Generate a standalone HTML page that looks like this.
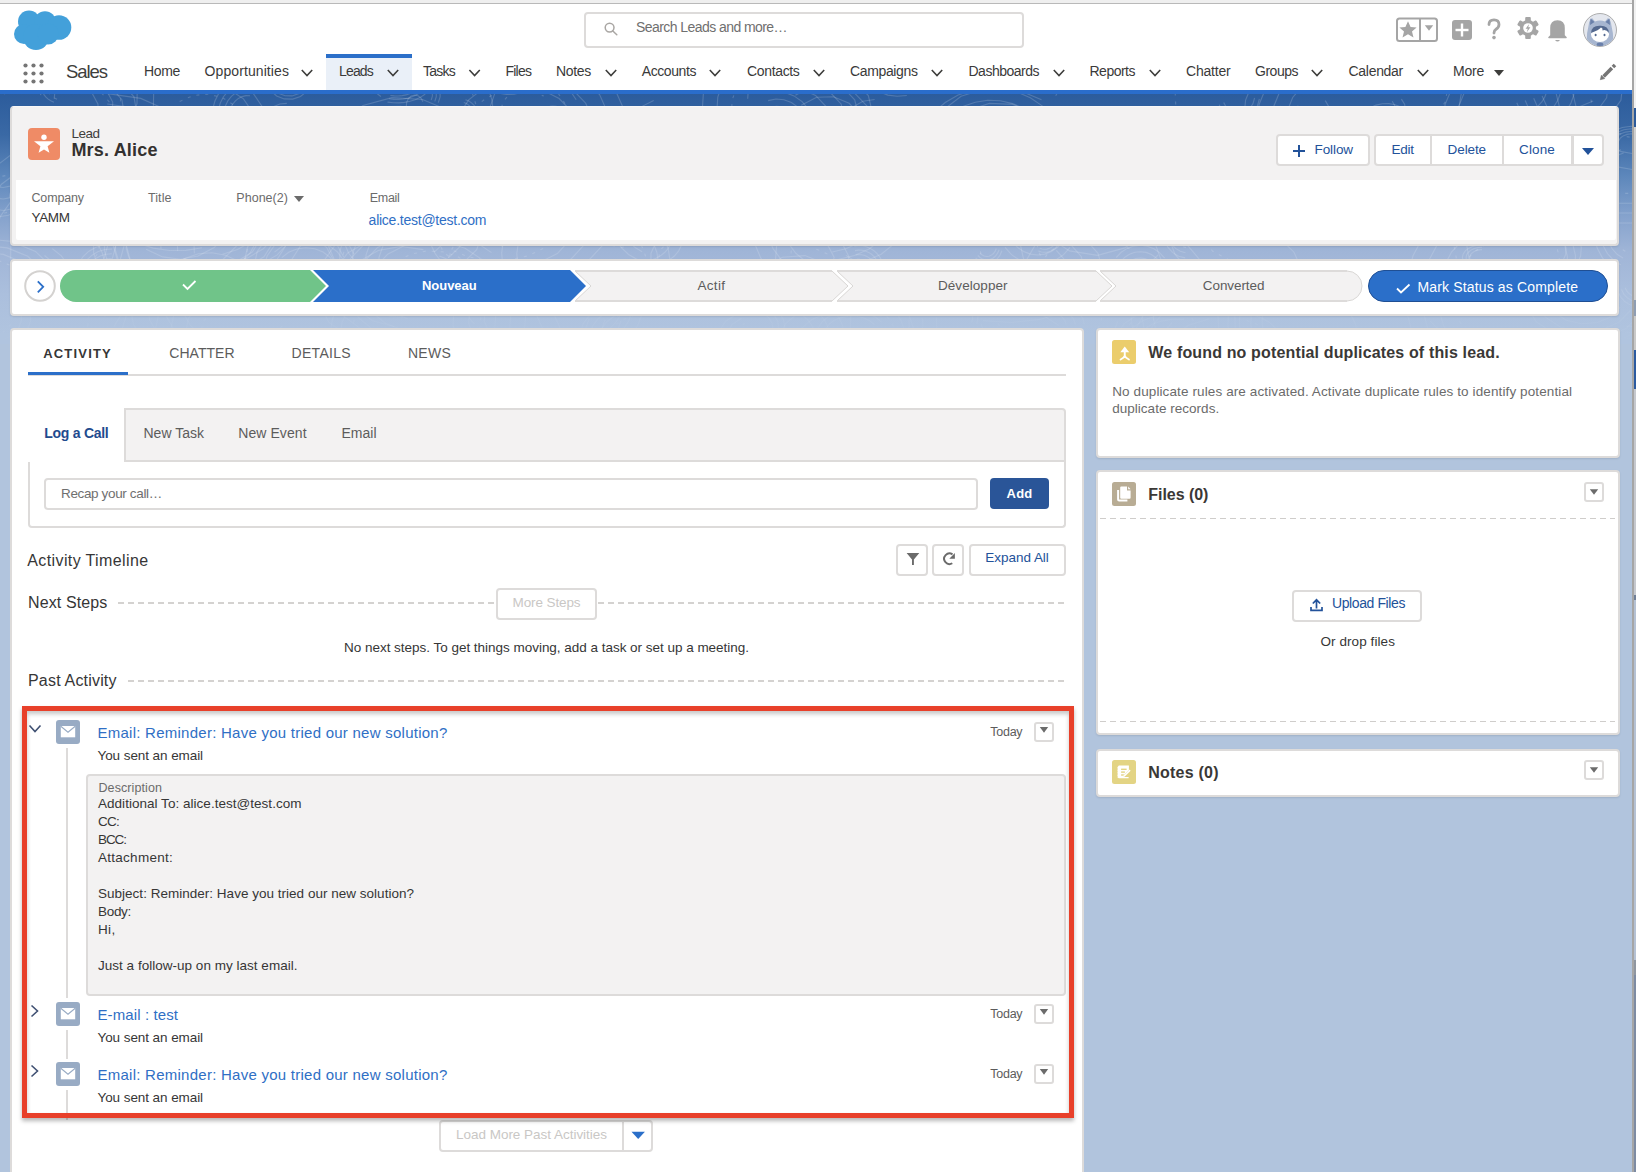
<!DOCTYPE html>
<html><head><meta charset="utf-8"><style>
html,body{margin:0;padding:0;}
body{width:1636px;height:1172px;overflow:hidden;position:relative;font-family:"Liberation Sans",sans-serif;background:#b1c4dd;}
.a{position:absolute;}
.t{position:absolute;white-space:pre;line-height:1;}
</style></head><body>
<div class="a" style="left:0;top:0;width:1636px;height:3px;background:#efefef"></div><div class="a" style="left:0;top:3px;width:1632px;height:1px;background:#b9b9b9"></div><div class="a" style="left:0;top:4px;width:1632px;height:86px;background:#fff"></div><div class="a" style="left:0;top:90px;width:1632px;height:4px;background:#2a6dcb"></div><div class="a" style="left:0;top:94px;width:1632px;height:250px;background:linear-gradient(to bottom,#2c5c9c 0px,#3a69a5 41px,#5d87bb 82px,#86a3cd 123px,#a0b5d7 158px,#abbfdd 200px,#b0c4df 240px)"></div><svg class="a" style="left:0;top:94px" width="1632" height="250" viewBox="0 94 1632 250"><defs><linearGradient id="pg" x1="0" y1="94" x2="0" y2="344" gradientUnits="userSpaceOnUse"><stop offset="0" stop-color="#fff" stop-opacity="0.17"/><stop offset="0.7" stop-color="#fff" stop-opacity="0.14"/><stop offset="1" stop-color="#fff" stop-opacity="0"/></linearGradient></defs><g fill="none" stroke="url(#pg)" stroke-width="1.1"><path d="M476.2 108.6 L479.9 103.1 L486.0 98.3 L494.1 94.5 L503.6 91.9 L514.1 90.8 L524.7 91.1 L534.8 92.9 L543.8 96.1" stroke-dasharray="3 6"/><path d="M464.0 107.1 L468.7 99.9 L476.7 93.6 L487.2 88.7 L499.6 85.4 L513.2 83.9 L527.0 84.3 L540.2 86.6 L551.9 90.7"/><path d="M14.1 198.8 L12.9 196.3 L13.4 193.8 L15.5 191.6 L19.0 190.0 L23.3 189.2 L27.7 189.5 L31.7 190.6 L34.6 192.5" stroke-dasharray="3 6"/><path d="M11.0 199.6 L9.4 196.5 L10.1 193.2 L12.8 190.3 L17.3 188.3 L22.9 187.3 L28.7 187.6 L33.9 189.1 L37.7 191.6"/><path d="M1055.4 242.2 L1054.4 244.2 L1053.0 245.9 L1051.2 247.4 L1049.1 248.4 L1046.8 249.1 L1044.4 249.3 L1042.1 249.0 L1039.8 248.3"/><path d="M1058.6 243.1 L1057.3 245.7 L1055.5 248.0 L1053.1 249.9 L1050.4 251.3 L1047.5 252.1 L1044.4 252.3 L1041.3 252.0 L1038.3 251.0"/><path d="M463.8 102.6 L466.3 103.6 L468.4 104.9 L470.2 106.6 L471.4 108.4 L472.1 110.4 L472.2 112.4 L471.8 114.4 L470.8 116.3"/><path d="M465.5 99.8 L468.8 101.1 L471.5 102.9 L473.8 105.0 L475.4 107.4 L476.3 109.9 L476.5 112.6 L475.9 115.2 L474.6 117.7"/><path d="M603.6 234.7 L599.7 234.9 L596.0 234.4 L592.8 233.3 L590.5 231.6 L589.3 229.6 L589.5 227.5 L591.1 225.5 L593.7 224.0"/><path d="M604.5 236.5 L599.5 236.8 L594.6 236.1 L590.4 234.6 L587.4 232.4 L586.0 229.8 L586.3 227.1 L588.2 224.6 L591.6 222.5"/><path d="M605.4 238.2 L599.3 238.6 L593.3 237.8 L588.1 235.9 L584.4 233.2 L582.6 230.0 L583.0 226.7 L585.4 223.6 L589.6 221.1"/><path d="M772.3 354.1 L762.6 355.8 L752.7 355.0 L744.0 351.8 L737.5 346.7 L734.3 340.3 L734.8 333.6 L738.8 327.5 L745.9 322.8" stroke-dasharray="3 6"/><path d="M775.7 359.0 L763.2 361.2 L750.3 360.2 L738.9 356.0 L730.5 349.4 L726.3 341.1 L726.9 332.4 L732.2 324.4 L741.5 318.3"/><path d="M779.2 363.9 L763.7 366.6 L747.9 365.3 L733.8 360.2 L723.5 352.0 L718.4 341.9 L719.1 331.1 L725.6 321.3 L737.0 313.8"/><path d="M908.9 319.8 L909.2 325.7 L907.9 331.5 L905.1 337.1 L901.0 342.3 L895.5 346.8 L889.0 350.5 L881.6 353.4 L873.5 355.2"/><path d="M922.6 318.6 L922.9 326.3 L921.3 333.9 L917.7 341.1 L912.2 347.8 L905.2 353.7 L896.7 358.6 L887.0 362.2 L876.6 364.6"/><path d="M936.3 317.4 L936.7 326.8 L934.7 336.2 L930.2 345.1 L923.5 353.4 L914.8 360.6 L904.3 366.6 L892.5 371.1 L879.7 374.1"/><path d="M222.3 202.1 L225.4 202.9 L228.0 204.5 L230.0 206.8 L231.2 209.7 L231.4 212.7 L230.6 215.7 L228.9 218.2 L226.5 220.2"/><path d="M222.6 199.2 L226.6 200.2 L230.0 202.3 L232.6 205.4 L234.1 209.0 L234.4 213.0 L233.4 216.8 L231.2 220.2 L228.0 222.7"/><path d="M222.9 196.3 L227.8 197.5 L232.0 200.1 L235.2 203.9 L237.1 208.4 L237.4 213.3 L236.2 218.0 L233.4 222.1 L229.6 225.2"/><path d="M575.7 186.5 L572.8 192.0 L568.9 196.9 L564.3 200.9 L559.1 204.1 L553.5 206.2 L547.6 207.2 L541.6 207.2 L535.8 206.0" stroke-dasharray="3 6"/><path d="M82.5 228.6 L90.7 234.8 L97.4 243.1 L102.3 253.0 L105.2 263.9 L106.0 275.4 L104.5 286.8 L100.8 297.5 L95.2 306.8"/><path d="M88.0 215.2 L98.5 223.3 L107.3 234.0 L113.7 246.8 L117.5 261.1 L118.5 276.0 L116.5 290.8 L111.8 304.7 L104.5 316.9"/><path d="M93.4 201.8 L106.4 211.7 L117.2 224.9 L125.1 240.7 L129.8 258.3 L130.9 276.6 L128.5 294.8 L122.7 311.9 L113.8 326.9"/><path d="M14.4 207.4 L11.2 210.5 L6.2 212.6 L0.3 213.6 L-5.9 213.2 L-11.4 211.6 L-15.5 208.9 L-17.7 205.6 L-17.6 202.0" stroke-dasharray="3 6"/><path d="M19.1 208.5 L14.9 212.4 L8.4 215.2 L0.7 216.5 L-7.3 216.1 L-14.4 213.9 L-19.8 210.5 L-22.6 206.1 L-22.5 201.4"/><path d="M616.8 348.0 L613.1 343.8 L611.0 339.2 L610.7 334.4 L612.1 329.7 L615.2 325.3 L619.9 321.5 L625.9 318.4 L632.8 316.3" stroke-dasharray="3 6"/><path d="M608.6 351.6 L603.7 346.1 L601.0 340.1 L600.5 333.9 L602.4 327.8 L606.5 322.1 L612.6 317.2 L620.3 313.2 L629.3 310.4"/><path d="M600.3 355.2 L594.3 348.5 L591.0 341.1 L590.4 333.5 L592.7 326.0 L597.7 319.0 L605.2 312.9 L614.7 308.0 L625.8 304.5"/><path d="M592.0 358.8 L584.9 350.9 L580.9 342.1 L580.3 333.0 L583.0 324.1 L589.0 315.8 L597.9 308.6 L609.2 302.7 L622.4 298.7"/><path d="M1468.2 136.0 L1474.3 144.1 L1475.4 153.5 L1471.3 162.3 L1462.7 169.1 L1451.1 172.6 L1438.6 172.3 L1427.5 168.0 L1419.6 160.7" stroke-dasharray="3 6"/><path d="M1474.8 131.5 L1482.8 142.1 L1484.2 154.3 L1478.9 165.8 L1467.7 174.6 L1452.6 179.2 L1436.4 178.7 L1421.9 173.2 L1411.7 163.7"/><path d="M223.8 269.5 L221.9 270.1 L219.9 270.3 L217.9 270.0 L216.1 269.2 L214.5 267.9 L213.2 266.3 L212.2 264.4 L211.7 262.3" stroke-dasharray="3 6"/><path d="M224.9 272.0 L222.4 272.9 L219.8 273.1 L217.3 272.7 L214.9 271.6 L212.8 270.0 L211.0 267.9 L209.8 265.5 L209.1 262.8"/><path d="M225.9 274.6 L222.9 275.6 L219.7 275.9 L216.6 275.4 L213.6 274.1 L211.0 272.1 L208.9 269.5 L207.4 266.5 L206.6 263.2"/><path d="M1022.7 157.5 L1023.4 162.8 L1022.5 168.1 L1020.0 172.7 L1016.2 176.2 L1011.7 178.1 L1006.8 178.2 L1002.1 176.6 L998.2 173.3"/><path d="M1026.8 156.0 L1027.8 162.9 L1026.5 169.8 L1023.3 175.8 L1018.4 180.3 L1012.5 182.8 L1006.1 183.0 L1000.1 180.8 L995.0 176.5"/><path d="M1031.0 154.5 L1032.1 163.0 L1030.6 171.5 L1026.6 178.9 L1020.6 184.5 L1013.3 187.5 L1005.5 187.7 L998.1 185.1 L991.8 179.8"/><path d="M1035.1 153.0 L1036.5 163.2 L1034.7 173.2 L1030.0 182.0 L1022.8 188.6 L1014.1 192.2 L1004.9 192.5 L996.0 189.3 L988.6 183.1"/><path d="M1465.5 331.6 L1458.2 318.8 L1454.3 304.5 L1454.1 289.5 L1457.6 275.1 L1464.5 262.1 L1474.5 251.4 L1486.7 243.9 L1500.3 240.1" stroke-dasharray="3 6"/><path d="M1453.0 342.2 L1443.5 325.6 L1438.4 307.0 L1438.2 287.5 L1442.7 268.7 L1451.7 251.8 L1464.6 238.0 L1480.5 228.2 L1498.2 223.2"/><path d="M1440.5 352.9 L1428.8 332.4 L1422.6 309.4 L1422.2 285.5 L1427.8 262.4 L1438.9 241.6 L1454.8 224.6 L1474.3 212.6 L1496.2 206.4"/><path d="M1428.0 363.5 L1414.1 339.2 L1406.7 311.9 L1406.3 283.5 L1412.9 256.0 L1426.1 231.3 L1445.0 211.2 L1468.2 196.9 L1494.1 189.5"/><path d="M57.0 99.3 L54.5 98.1 L52.3 96.8 L50.6 95.2 L49.3 93.4 L48.5 91.6 L48.2 89.7 L48.4 87.8 L49.1 85.9" stroke-dasharray="3 6"/><path d="M53.9 102.2 L50.7 100.7 L47.9 98.9 L45.7 96.9 L44.0 94.6 L42.9 92.2 L42.6 89.7 L42.8 87.3 L43.8 84.9"/><path d="M893.4 366.4 L883.2 367.1 L873.0 366.4 L863.5 364.3 L855.2 361.0 L848.8 356.5 L844.7 351.4 L843.1 345.8 L844.1 340.2"/><path d="M896.5 372.7 L883.3 373.7 L870.0 372.8 L857.6 370.1 L846.9 365.7 L838.6 359.9 L833.2 353.2 L831.1 346.0 L832.5 338.7"/><path d="M899.7 379.1 L883.4 380.3 L867.1 379.2 L851.8 375.8 L838.6 370.4 L828.3 363.4 L821.7 355.1 L819.1 346.2 L820.8 337.2"/><path d="M1009.8 205.9 L1009.8 209.2 L1008.6 212.5 L1006.4 215.3 L1003.3 217.5 L999.7 218.9 L995.7 219.3 L991.7 218.7 L988.1 217.3"/><path d="M1013.9 205.4 L1013.9 209.8 L1012.4 214.0 L1009.5 217.7 L1005.6 220.5 L1000.8 222.3 L995.6 222.8 L990.4 222.1 L985.7 220.2"/><path d="M147.3 189.3 L144.2 191.0 L141.0 192.2 L137.6 192.8 L134.2 192.8 L130.9 192.3 L127.6 191.2 L124.6 189.5 L121.8 187.4"/><path d="M150.7 195.3 L146.8 197.5 L142.6 199.0 L138.2 199.8 L133.8 199.9 L129.4 199.1 L125.2 197.7 L121.2 195.6 L117.6 192.8"/><path d="M154.2 201.3 L149.3 204.0 L144.1 205.9 L138.8 206.8 L133.3 206.9 L127.9 206.0 L122.7 204.3 L117.9 201.6 L113.4 198.2"/><path d="M221.5 226.4 L221.2 229.6 L219.6 232.5 L216.8 234.7 L213.2 235.6 L209.5 235.4 L206.2 233.9 L203.9 231.4 L202.8 228.3"/><path d="M224.3 226.1 L224.0 230.3 L221.8 234.0 L218.1 236.8 L213.5 238.1 L208.7 237.7 L204.4 235.8 L201.4 232.5 L200.0 228.5"/><path d="M227.1 225.8 L226.7 230.9 L224.0 235.6 L219.5 238.9 L213.9 240.5 L207.9 240.1 L202.7 237.7 L198.9 233.7 L197.2 228.7"/><path d="M826.0 328.9 L829.1 324.2 L834.2 320.3 L840.7 317.6 L848.2 316.2 L855.9 316.2 L863.3 317.8 L869.7 320.7 L874.6 324.7"/><path d="M818.4 327.6 L822.4 321.5 L828.9 316.4 L837.4 312.8 L847.1 311.0 L857.2 311.1 L866.9 313.1 L875.2 316.9 L881.5 322.1"/><path d="M1300.3 303.9 L1303.0 296.4 L1308.5 289.6 L1316.4 284.0 L1326.2 279.8 L1337.3 277.3 L1348.9 276.7 L1360.4 278.1 L1371.1 281.3" stroke-dasharray="3 6"/><path d="M1308.9 220.8 L1304.0 216.3 L1301.3 210.5 L1301.2 204.1 L1303.6 198.2 L1308.2 193.5 L1314.4 190.8 L1321.3 190.4 L1327.8 192.4"/><path d="M1305.9 224.9 L1299.6 219.1 L1296.0 211.5 L1295.8 203.3 L1299.0 195.6 L1305.0 189.5 L1313.1 186.0 L1322.0 185.4 L1330.5 188.0"/><path d="M1302.9 229.1 L1295.1 221.9 L1290.7 212.6 L1290.5 202.5 L1294.4 193.0 L1301.8 185.5 L1311.7 181.1 L1322.7 180.5 L1333.1 183.7"/><path d="M1609.0 187.9 L1605.0 188.5 L1601.0 188.5 L1597.0 188.0 L1593.3 187.0 L1589.9 185.5 L1587.1 183.5 L1585.0 181.3 L1583.7 178.7"/><path d="M758.3 235.9 L777.3 231.9 L797.5 232.6 L815.6 237.7 L828.5 246.4 L834.1 257.3 L831.5 268.5 L821.0 278.2 L804.5 284.8"/><path d="M750.4 228.9 L775.0 223.7 L801.3 224.5 L824.9 231.2 L841.7 242.5 L849.0 256.7 L845.5 271.3 L831.9 283.9 L810.4 292.4"/><path d="M797.6 87.7 L815.6 95.4 L827.5 108.0 L831.2 123.1 L826.0 137.9 L812.9 149.8 L794.2 156.6 L773.3 157.1 L754.0 151.2"/><path d="M802.2 77.4 L825.6 87.5 L841.1 103.9 L845.9 123.5 L839.2 142.8 L822.1 158.2 L797.8 167.1 L770.6 167.7 L745.6 160.0"/><path d="M806.8 67.2 L835.6 79.6 L854.7 99.8 L860.6 123.9 L852.3 147.6 L831.3 166.6 L801.3 177.5 L767.9 178.3 L737.1 168.8"/><path d="M811.5 57.0 L845.6 71.8 L868.3 95.6 L875.3 124.3 L865.5 152.4 L840.5 175.0 L804.9 188.0 L765.3 188.9 L728.7 177.6"/><path d="M1254.6 98.0 L1252.9 103.8 L1249.7 108.7 L1245.5 112.2 L1240.5 113.9 L1235.3 113.7 L1230.5 111.5 L1226.4 107.6 L1223.7 102.4"/><path d="M1259.4 99.0 L1257.2 106.6 L1253.1 113.0 L1247.5 117.5 L1241.1 119.7 L1234.3 119.4 L1228.0 116.5 L1222.8 111.5 L1219.2 104.7"/><path d="M1030.1 274.2 L1021.0 279.1 L1011.1 280.6 L1001.3 278.5 L992.4 273.1 L985.4 264.9 L980.9 254.5 L979.2 243.1 L980.7 231.7" stroke-dasharray="3 6"/><path d="M879.8 310.6 L885.1 314.6 L889.7 319.7 L893.1 325.7 L895.3 332.4 L896.3 339.4 L895.8 346.5 L894.1 353.4 L891.1 359.7" stroke-dasharray="3 6"/><path d="M884.0 301.6 L891.0 306.7 L896.8 313.3 L901.3 321.2 L904.2 329.9 L905.4 339.0 L904.9 348.3 L902.6 357.2 L898.7 365.4"/><path d="M888.2 292.6 L896.8 298.9 L904.0 307.0 L909.5 316.6 L913.1 327.3 L914.6 338.6 L913.9 350.0 L911.1 361.0 L906.3 371.1"/><path d="M834.6 272.5 L838.0 274.6 L841.0 277.2 L843.4 280.2 L845.2 283.5 L846.4 287.0 L846.9 290.7 L846.7 294.3 L845.8 297.9"/><path d="M838.4 266.8 L842.8 269.5 L846.7 272.9 L849.8 276.8 L852.2 281.1 L853.8 285.7 L854.4 290.4 L854.2 295.2 L853.0 299.9"/><path d="M842.1 261.1 L847.6 264.5 L852.4 268.6 L856.3 273.4 L859.2 278.7 L861.1 284.3 L861.9 290.2 L861.6 296.0 L860.2 301.8"/><path d="M845.9 255.4 L852.4 259.4 L858.0 264.3 L862.7 270.0 L866.2 276.3 L868.4 283.0 L869.4 289.9 L869.0 296.9 L867.3 303.7"/><path d="M1124.6 280.3 L1128.7 285.8 L1131.7 292.0 L1133.6 298.8 L1134.3 305.8 L1133.8 312.8 L1132.1 319.6 L1129.2 326.0 L1125.3 331.6" stroke-dasharray="3 6"/><path d="M1484.6 328.6 L1478.1 332.6 L1471.0 335.3 L1463.5 336.5 L1456.0 336.2 L1448.6 334.4 L1441.7 331.2 L1435.5 326.7 L1430.3 321.0"/><path d="M924.6 134.2 L930.6 135.9 L936.2 138.5 L941.1 141.9 L945.3 146.1 L948.6 150.9 L950.8 156.2 L951.9 161.7 L952.0 167.3"/><path d="M926.8 125.1 L934.7 127.3 L941.9 130.7 L948.3 135.2 L953.8 140.6 L958.0 146.9 L960.9 153.7 L962.4 160.8 L962.4 168.1"/><path d="M301.9 84.1 L300.0 88.1 L296.2 91.2 L291.3 92.8 L286.0 92.6 L281.2 90.8 L277.7 87.6 L276.1 83.5 L276.5 79.2" stroke-dasharray="3 6"/><path d="M305.8 84.7 L303.3 89.9 L298.4 93.8 L292.0 95.9 L285.1 95.8 L278.9 93.4 L274.3 89.2 L272.2 83.9 L272.7 78.3"/><path d="M309.7 85.2 L306.5 91.6 L300.5 96.5 L292.7 99.1 L284.2 98.9 L276.6 96.0 L270.9 90.8 L268.3 84.2 L269.0 77.4"/><path d="M980.5 226.7 L978.9 216.5 L980.5 206.3 L985.2 197.1 L992.4 189.6 L1001.6 184.6 L1011.8 182.5 L1022.2 183.6 L1031.8 187.6"/><path d="M970.5 229.7 L968.5 216.4 L970.6 203.2 L976.7 191.2 L986.1 181.5 L998.0 175.0 L1011.3 172.3 L1024.8 173.7 L1037.3 179.0"/><path d="M1109.6 310.0 L1122.7 296.5 L1142.9 287.8 L1166.4 285.4 L1189.4 289.9 L1207.6 300.3 L1218.0 314.9 L1218.7 331.2 L1209.6 346.2"/><path d="M1093.7 305.8 L1110.8 288.1 L1136.9 276.8 L1167.6 273.8 L1197.4 279.6 L1221.1 293.2 L1234.6 312.2 L1235.5 333.3 L1223.7 352.8"/><path d="M654.6 194.1 L652.9 189.4 L652.2 184.5 L652.6 179.5 L654.1 174.7 L656.5 170.3 L659.9 166.5 L664.0 163.5 L668.7 161.4"/><path d="M1531.1 148.8 L1514.9 156.8 L1496.8 157.9 L1479.7 152.1 L1466.3 140.4 L1458.8 124.5 L1458.4 107.0 L1465.1 90.8 L1478.0 78.5"/><path d="M1539.5 159.1 L1518.5 169.3 L1495.0 170.9 L1472.7 163.4 L1455.3 148.0 L1445.5 127.4 L1445.0 104.7 L1453.8 83.6 L1470.5 67.6"/><path d="M1217.6 68.5 L1228.2 65.6 L1239.6 64.3 L1251.1 64.4 L1262.4 66.0 L1272.8 69.1 L1281.9 73.5 L1289.3 78.9 L1294.6 85.2"/><path d="M1209.6 59.8 L1223.4 56.1 L1238.1 54.3 L1253.2 54.5 L1267.8 56.7 L1281.3 60.7 L1293.2 66.3 L1302.8 73.4 L1309.7 81.6"/><path d="M1201.6 51.2 L1218.6 46.6 L1236.7 44.4 L1255.2 44.7 L1273.2 47.3 L1289.8 52.2 L1304.4 59.2 L1316.3 67.9 L1324.8 78.0"/><path d="M1193.6 42.5 L1213.8 37.1 L1235.3 34.5 L1257.2 34.8 L1278.6 37.9 L1298.4 43.7 L1315.7 52.0 L1329.7 62.4 L1339.9 74.4"/><path d="M567.7 129.8 L565.6 137.1 L561.4 143.4 L555.5 148.2 L548.4 150.9 L540.9 151.3 L533.5 149.4 L527.1 145.4 L522.3 139.6"/><path d="M638.8 237.9 L631.2 244.8 L621.9 247.4 L612.4 245.5 L604.4 239.2 L599.2 229.8 L597.7 218.6 L600.2 207.7 L606.2 198.9" stroke-dasharray="3 6"/><path d="M106.6 114.3 L127.1 117.3 L144.4 125.0 L155.8 136.1 L159.7 149.1 L155.5 162.1 L143.8 173.1 L126.3 180.6 L105.7 183.4"/><path d="M107.2 104.0 L133.9 107.9 L156.4 117.8 L171.2 132.3 L176.2 149.2 L170.7 166.1 L155.5 180.4 L132.9 190.1 L106.0 193.8"/><path d="M107.8 93.6 L140.7 98.4 L168.3 110.6 L186.5 128.5 L192.8 149.3 L186.0 170.1 L167.3 187.7 L139.4 199.7 L106.3 204.1"/><path d="M642.1 251.7 L635.5 247.8 L630.1 242.9 L626.2 237.0 L623.9 230.5 L623.5 223.7 L625.0 217.1 L628.1 210.9 L632.9 205.4"/><path d="M637.2 259.5 L628.6 254.5 L621.6 248.0 L616.5 240.4 L613.7 231.9 L613.1 223.2 L615.0 214.5 L619.1 206.4 L625.3 199.4"/><path d="M709.6 40.2 L718.7 43.9 L726.9 49.1 L734.1 55.5 L740.0 63.0 L744.4 71.3 L747.2 80.2 L748.3 89.5 L747.7 98.8"/><path d="M407.4 110.4 L406.3 106.4 L406.7 102.2 L408.4 98.5 L411.2 96.0 L414.7 95.0 L418.1 95.8 L421.1 98.2 L422.9 101.7"/><path d="M879.3 141.8 L878.1 143.3 L876.5 144.8 L874.4 145.9 L871.9 146.8 L869.2 147.3 L866.4 147.5 L863.5 147.4 L860.8 146.8"/><path d="M883.2 142.5 L881.7 144.6 L879.5 146.4 L876.8 148.0 L873.6 149.1 L870.1 149.8 L866.4 150.1 L862.7 149.8 L859.2 149.2"/><path d="M887.1 143.3 L885.3 145.9 L882.6 148.1 L879.2 150.0 L875.3 151.4 L871.0 152.3 L866.4 152.6 L861.9 152.3 L857.6 151.5"/><path d="M869.5 159.7 L858.2 156.1 L849.2 148.7 L843.7 138.6 L842.4 127.2 L845.6 116.2 L852.8 107.1 L862.9 101.2 L874.6 99.5"/><path d="M-49.8 286.3 L-49.0 276.6 L-42.1 268.0 L-30.3 262.0 L-15.6 259.4 L-0.6 260.9 L12.2 266.2 L20.6 274.2 L23.0 283.7" stroke-dasharray="3 6"/><path d="M-60.7 287.4 L-59.7 274.8 L-50.7 263.7 L-35.3 255.8 L-16.2 252.5 L3.4 254.4 L20.0 261.2 L30.8 271.7 L34.0 284.1"/><path d="M-71.5 288.5 L-70.3 273.1 L-59.3 259.3 L-40.3 249.6 L-16.8 245.5 L7.3 247.9 L27.8 256.3 L41.1 269.2 L45.0 284.4"/><path d="M-82.4 289.6 L-80.9 271.3 L-67.8 254.9 L-45.4 243.4 L-17.4 238.6 L11.2 241.4 L35.5 251.4 L51.3 266.7 L56.0 284.8"/><path d="M1069.9 288.1 L1059.7 282.0 L1050.8 273.5 L1043.6 262.9 L1038.5 250.9 L1035.6 237.8 L1035.1 224.3 L1037.0 210.9 L1041.3 198.4" stroke-dasharray="3 6"/><path d="M1064.2 306.0 L1050.9 298.1 L1039.3 287.0 L1029.9 273.3 L1023.2 257.6 L1019.5 240.6 L1018.9 223.0 L1021.4 205.7 L1026.9 189.4"/><path d="M1367.9 301.3 L1362.7 297.9 L1358.3 293.8 L1354.7 289.3 L1352.2 284.3 L1350.8 279.1 L1350.5 273.8 L1351.3 268.5 L1353.2 263.4" stroke-dasharray="3 6"/><path d="M1020.3 311.0 L1027.6 309.4 L1035.4 308.8 L1043.2 309.3 L1050.5 310.8 L1056.8 313.3 L1061.7 316.6 L1064.9 320.5 L1066.2 324.7"/><path d="M1015.7 306.8 L1025.1 304.7 L1035.2 303.9 L1045.4 304.5 L1054.9 306.5 L1063.1 309.8 L1069.5 314.1 L1073.7 319.1 L1075.3 324.6"/><path d="M1011.1 302.6 L1022.6 299.9 L1035.1 299.0 L1047.6 299.7 L1059.3 302.2 L1069.4 306.2 L1077.3 311.5 L1082.4 317.7 L1084.4 324.4"/><path d="M988.7 277.4 L987.1 277.2 L985.7 276.8 L984.3 276.4 L983.0 275.8 L982.0 275.1 L981.0 274.3 L980.3 273.4 L979.9 272.4"/><path d="M988.3 279.3 L986.3 279.0 L984.4 278.6 L982.6 278.0 L981.0 277.2 L979.6 276.3 L978.4 275.3 L977.5 274.1 L976.8 272.9"/><path d="M987.9 281.2 L985.5 280.9 L983.1 280.4 L980.9 279.6 L978.9 278.7 L977.2 277.6 L975.7 276.3 L974.6 274.9 L973.8 273.4"/><path d="M1625.3 251.3 L1620.8 248.4 L1617.0 244.2 L1614.2 239.0 L1612.6 233.2 L1612.2 227.0 L1613.2 221.0 L1615.5 215.5 L1618.8 210.8" stroke-dasharray="3 6"/><path d="M1623.1 258.1 L1617.1 254.3 L1612.2 248.8 L1608.5 242.1 L1606.5 234.5 L1606.0 226.6 L1607.3 218.7 L1610.3 211.5 L1614.6 205.4"/><path d="M1620.8 264.9 L1613.5 260.2 L1607.4 253.5 L1602.9 245.2 L1600.3 235.9 L1599.8 226.1 L1601.4 216.5 L1605.0 207.6 L1610.4 200.1"/><path d="M1618.5 271.7 L1609.8 266.1 L1602.6 258.2 L1597.3 248.3 L1594.2 237.2 L1593.6 225.6 L1595.5 214.2 L1599.8 203.6 L1606.2 194.7"/><path d="M111.2 122.9 L118.4 124.1 L125.1 126.2 L131.2 129.1 L136.5 132.6 L140.7 136.7 L143.9 141.2 L145.8 146.0 L146.4 151.0"/><path d="M113.3 114.5 L122.6 116.1 L131.3 118.8 L139.3 122.5 L146.1 127.1 L151.7 132.4 L155.7 138.3 L158.2 144.5 L159.0 151.0"/><path d="M648.1 88.6 L645.2 88.5 L642.5 87.7 L640.3 86.4 L638.7 84.7 L638.0 82.7 L638.2 80.6 L639.3 78.7 L641.2 77.1"/><path d="M648.4 90.5 L644.7 90.4 L641.1 89.4 L638.2 87.7 L636.2 85.4 L635.3 82.8 L635.6 80.1 L637.0 77.6 L639.5 75.6"/><path d="M1066.3 314.5 L1048.5 303.1 L1038.6 286.9 L1038.4 269.1 L1047.9 252.9 L1065.3 241.2 L1087.5 236.2 L1110.3 238.9 L1129.6 248.8" stroke-dasharray="3 6"/><path d="M1058.8 325.5 L1035.8 310.7 L1022.9 289.7 L1022.6 266.6 L1035.0 245.4 L1057.6 230.2 L1086.5 223.8 L1116.1 227.3 L1141.1 240.1"/><path d="M29.8 261.4 L50.4 263.2 L68.9 272.1 L82.5 286.8 L89.2 305.2 L88.1 324.6 L79.3 342.3 L64.1 355.5 L44.8 362.5" stroke-dasharray="3 6"/><path d="M1362.4 189.5 L1373.8 186.7 L1385.6 186.3 L1397.1 188.4 L1407.9 192.9 L1417.5 199.5 L1425.4 208.0 L1431.2 218.0 L1434.8 228.9" stroke-dasharray="3 6"/><path d="M1356.7 174.5 L1371.5 170.9 L1386.8 170.4 L1401.8 173.1 L1415.9 178.9 L1428.3 187.6 L1438.6 198.6 L1446.2 211.5 L1450.8 225.8"/><path d="M1082.0 355.3 L1080.4 358.5 L1078.1 361.5 L1075.4 364.2 L1072.1 366.4 L1068.5 368.3 L1064.5 369.6 L1060.3 370.5 L1056.1 370.8"/><path d="M1089.9 357.4 L1087.7 361.6 L1084.8 365.5 L1081.2 368.9 L1077.0 371.9 L1072.2 374.3 L1067.1 376.0 L1061.7 377.1 L1056.1 377.5"/><path d="M752.1 70.0 L754.7 54.9 L761.5 41.3 L772.0 30.3 L785.2 23.1 L800.0 20.3 L814.8 22.2 L828.5 28.4 L839.7 38.6"/><path d="M1247.4 261.9 L1229.2 260.1 L1212.8 251.3 L1200.3 236.7 L1193.5 218.1 L1193.3 198.1 L1199.7 179.4 L1211.8 164.4 L1228.0 155.1" stroke-dasharray="3 6"/><path d="M1248.9 278.2 L1225.2 275.9 L1203.8 264.5 L1187.6 245.4 L1178.8 221.3 L1178.5 195.3 L1186.8 171.0 L1202.5 151.5 L1223.6 139.4"/><path d="M1250.3 294.5 L1221.1 291.7 L1194.8 277.7 L1174.9 254.2 L1164.1 224.5 L1163.7 192.5 L1173.9 162.5 L1193.2 138.5 L1219.2 123.7"/><path d="M1251.7 310.9 L1217.1 307.5 L1185.9 290.8 L1162.2 263.0 L1149.3 227.7 L1148.9 189.7 L1161.0 154.1 L1183.9 125.6 L1214.8 108.0"/><path d="M813.1 148.9 L823.4 151.7 L832.3 157.6 L838.7 166.0 L842.1 176.0 L842.0 186.5 L838.5 196.4 L831.9 204.6 L822.9 210.4"/><path d="M961.2 137.8 L967.1 132.7 L973.9 128.8 L981.4 126.2 L989.1 125.0 L997.0 125.3 L1004.7 127.1 L1011.9 130.2 L1018.4 134.6"/><path d="M952.1 129.2 L959.8 122.6 L968.7 117.5 L978.3 114.2 L988.4 112.7 L998.7 113.1 L1008.6 115.3 L1018.0 119.4 L1026.5 125.1"/><path d="M943.0 120.7 L952.5 112.5 L963.4 106.3 L975.3 102.2 L987.7 100.3 L1000.3 100.8 L1012.6 103.6 L1024.1 108.6 L1034.5 115.6"/><path d="M933.9 112.2 L945.2 102.5 L958.1 95.1 L972.2 90.2 L987.0 88.0 L1002.0 88.5 L1016.6 91.8 L1030.3 97.8 L1042.6 106.1"/><path d="M411.1 306.3 L399.1 301.3 L389.1 293.0 L382.1 282.3 L378.6 270.0 L379.0 257.3 L383.2 245.2 L390.9 234.9 L401.3 227.3"/><path d="M407.8 318.7 L392.1 312.2 L379.2 301.5 L370.0 287.5 L365.5 271.5 L366.0 255.0 L371.5 239.3 L381.4 225.9 L395.0 216.0"/><path d="M404.4 331.1 L385.2 323.1 L369.2 309.9 L358.0 292.7 L352.4 273.1 L353.0 252.7 L359.8 233.4 L372.0 216.9 L388.7 204.7"/><path d="M401.1 343.5 L378.2 334.0 L359.3 318.3 L345.9 297.9 L339.3 274.6 L340.0 250.4 L348.0 227.5 L362.6 207.9 L382.4 193.4"/><path d="M1310.9 371.5 L1304.3 377.3 L1295.7 381.6 L1285.8 383.9 L1275.4 384.1 L1265.3 382.3 L1256.4 378.4 L1249.4 372.9 L1244.8 366.2" stroke-dasharray="3 6"/><path d="M1378.1 371.7 L1364.9 372.0 L1352.7 368.7 L1343.6 362.2 L1339.1 353.7 L1340.1 344.7 L1346.4 336.7 L1356.8 331.2 L1369.6 329.2" stroke-dasharray="3 6"/><path d="M228.4 191.1 L242.5 196.7 L253.2 204.5 L259.7 213.8 L261.2 223.9 L257.8 233.7 L249.7 242.6 L237.5 249.6 L222.5 254.2"/><path d="M235.7 181.9 L254.1 189.2 L268.1 199.3 L276.4 211.4 L278.5 224.4 L274.0 237.3 L263.4 248.7 L247.7 257.9 L228.1 263.9"/><path d="M243.1 172.6 L265.7 181.6 L282.9 194.0 L293.2 209.0 L295.7 225.0 L290.2 240.8 L277.2 254.9 L257.8 266.2 L233.7 273.6"/><path d="M391.3 330.7 L389.6 335.7 L385.3 340.1 L378.8 343.8 L370.4 346.3 L361.0 347.5 L351.4 347.2 L342.3 345.5 L334.5 342.5"/><path d="M401.2 330.8 L399.1 337.2 L393.6 343.1 L385.0 347.8 L374.1 351.1 L361.9 352.6 L349.4 352.3 L337.6 350.1 L327.5 346.2"/><path d="M411.2 331.0 L408.6 338.8 L401.8 346.0 L391.2 351.9 L377.9 355.9 L362.8 357.8 L347.4 357.3 L332.9 354.6 L320.4 349.9"/><path d="M1197.3 204.7 L1191.9 202.4 L1187.6 199.4 L1184.7 195.9 L1183.3 192.1 L1183.5 188.2 L1185.4 184.4 L1188.7 181.0 L1193.3 178.2"/><path d="M1193.2 209.0 L1186.2 206.0 L1180.7 202.1 L1176.9 197.5 L1175.1 192.5 L1175.4 187.4 L1177.8 182.5 L1182.1 178.1 L1188.1 174.5"/><path d="M1189.2 213.2 L1180.6 209.5 L1173.7 204.7 L1169.0 199.0 L1166.8 192.9 L1167.2 186.7 L1170.1 180.7 L1175.5 175.2 L1182.9 170.7"/><path d="M1185.2 217.4 L1174.9 213.0 L1166.8 207.3 L1161.2 200.6 L1158.6 193.3 L1159.0 185.9 L1162.5 178.8 L1168.9 172.3 L1177.7 167.0"/><path d="M155.3 388.1 L144.6 383.2 L135.3 375.5 L128.0 365.3 L123.3 353.4 L121.4 340.5 L122.5 327.5 L126.5 315.2 L133.0 304.4"/><path d="M598.3 201.2 L591.9 204.3 L583.8 205.9 L575.2 205.7 L567.3 203.8 L561.4 200.4 L558.4 196.1 L558.7 191.5 L562.2 187.2" stroke-dasharray="3 6"/><path d="M603.7 203.4 L595.4 207.4 L584.8 209.4 L573.6 209.2 L563.4 206.7 L555.7 202.3 L551.8 196.6 L552.2 190.6 L556.8 185.2"/><path d="M364.7 162.7 L356.6 155.0 L354.3 145.9 L358.2 137.0 L367.5 129.9 L380.5 125.8 L395.1 125.5 L408.6 129.1 L418.5 135.8"/><path d="M357.4 167.4 L347.0 157.4 L344.0 145.5 L349.0 134.0 L361.0 124.7 L378.1 119.4 L397.0 119.1 L414.5 123.7 L427.4 132.5"/><path d="M350.1 172.1 L337.3 159.8 L333.6 145.2 L339.7 130.9 L354.6 119.6 L375.6 113.1 L398.9 112.6 L420.4 118.3 L436.3 129.1"/><path d="M342.9 176.8 L327.6 162.1 L323.3 144.8 L330.5 127.9 L348.2 114.4 L373.1 106.7 L400.8 106.2 L426.3 112.9 L445.2 125.8"/><path d="M1565.9 354.0 L1559.7 365.6 L1549.8 374.3 L1537.6 378.9 L1524.5 378.9 L1512.2 374.2 L1502.4 365.5 L1496.2 353.9 L1494.6 340.8"/><path d="M1576.3 357.4 L1568.3 372.5 L1555.5 383.7 L1539.5 389.8 L1522.5 389.7 L1506.5 383.6 L1493.8 372.3 L1485.8 357.2 L1483.6 340.2"/><path d="M1075.9 161.7 L1073.4 163.7 L1070.6 164.9 L1067.6 165.1 L1064.7 164.3 L1062.1 162.6 L1060.0 160.1 L1058.6 157.1 L1058.0 153.7"/><path d="M1078.1 164.3 L1074.9 166.9 L1071.2 168.4 L1067.3 168.7 L1063.5 167.7 L1060.1 165.5 L1057.4 162.2 L1055.6 158.3 L1054.8 153.9"/><path d="M1080.3 166.9 L1076.4 170.1 L1071.9 172.0 L1067.1 172.3 L1062.4 171.1 L1058.2 168.3 L1054.9 164.4 L1052.6 159.5 L1051.7 154.1"/><path d="M402.9 317.1 L390.8 316.4 L379.5 313.0 L369.9 307.3 L362.8 299.6 L358.7 290.7 L358.1 281.2 L360.9 272.0 L367.0 263.8"/><path d="M229.0 117.3 L229.4 112.8 L230.5 108.4 L232.5 104.5 L235.2 101.1 L238.4 98.4 L242.1 96.6 L246.0 95.6 L250.0 95.7"/><path d="M223.4 117.4 L223.8 111.5 L225.4 105.9 L227.9 100.7 L231.4 96.3 L235.6 92.9 L240.4 90.5 L245.5 89.3 L250.7 89.3"/><path d="M217.7 117.5 L218.3 110.3 L220.2 103.3 L223.3 97.0 L227.6 91.6 L232.8 87.3 L238.6 84.4 L244.9 82.9 L251.3 83.0"/><path d="M212.1 117.6 L212.7 109.0 L215.0 100.8 L218.8 93.3 L223.8 86.8 L230.0 81.8 L236.9 78.3 L244.4 76.5 L252.0 76.6"/><path d="M675.7 224.4 L678.0 221.7 L681.3 219.3 L685.3 217.5 L690.0 216.4 L694.9 216.0 L699.9 216.3 L704.6 217.4 L708.7 219.1"/><path d="M669.9 223.1 L672.9 219.5 L677.1 216.5 L682.4 214.1 L688.4 212.6 L694.9 212.1 L701.3 212.6 L707.4 214.0 L712.8 216.2"/><path d="M1456.9 283.9 L1459.1 278.1 L1462.9 273.0 L1468.4 268.8 L1475.0 265.8 L1482.3 264.3 L1489.9 264.3 L1497.3 265.9 L1503.9 268.8"/><path d="M790.5 231.8 L794.2 222.6 L801.0 215.4 L810.1 211.2 L820.1 210.5 L829.6 213.5 L837.3 219.8 L842.2 228.4 L843.5 238.1"/><path d="M453.7 135.4 L454.8 144.5 L451.4 153.2 L444.2 160.3 L434.2 164.5 L423.0 165.3 L412.3 162.5 L403.6 156.6 L398.5 148.5"/><path d="M225.6 183.3 L226.4 197.9 L223.1 212.2 L216.2 224.9 L206.1 235.0 L193.7 241.5 L180.1 244.0 L166.3 242.2 L153.7 236.4" stroke-dasharray="3 6"/><path d="M239.7 180.2 L240.6 199.3 L236.4 217.9 L227.4 234.4 L214.2 247.5 L198.1 256.0 L180.4 259.2 L162.6 256.9 L146.1 249.3"/><path d="M253.7 177.2 L254.9 200.7 L249.7 223.6 L238.6 243.9 L222.4 260.0 L202.6 270.4 L180.8 274.4 L158.8 271.6 L138.6 262.2"/><path d="M267.7 174.2 L269.1 202.1 L263.0 229.2 L249.8 253.4 L230.6 272.5 L207.0 284.9 L181.2 289.6 L155.1 286.3 L131.0 275.1"/><path d="M1618.7 140.9 L1620.2 138.2 L1623.1 135.9 L1627.0 134.4 L1631.6 133.8 L1636.3 134.1 L1640.5 135.4 L1643.7 137.5 L1645.6 140.1"/><path d="M1614.7 140.5 L1616.5 137.0 L1620.3 134.1 L1625.5 132.1 L1631.4 131.3 L1637.5 131.7 L1643.0 133.4 L1647.1 136.1 L1649.5 139.6"/><path d="M1610.6 140.2 L1612.9 135.8 L1617.5 132.2 L1623.9 129.8 L1631.2 128.8 L1638.7 129.3 L1645.4 131.4 L1650.6 134.8 L1653.5 139.0"/><path d="M1606.5 139.8 L1609.3 134.7 L1614.8 130.4 L1622.3 127.5 L1631.1 126.3 L1639.9 127.0 L1647.9 129.4 L1654.0 133.4 L1657.5 138.4"/><path d="M98.9 293.3 L99.5 292.6 L100.3 292.0 L101.3 291.5 L102.4 291.1 L103.6 290.8 L104.8 290.6 L106.1 290.5 L107.4 290.6"/><path d="M96.7 292.7 L97.5 291.8 L98.6 291.1 L99.8 290.4 L101.3 289.9 L102.8 289.5 L104.4 289.2 L106.1 289.1 L107.8 289.2"/><path d="M1062.5 241.8 L1057.6 247.3 L1051.5 251.5 L1044.7 254.1 L1037.6 255.0 L1030.4 254.1 L1023.6 251.5 L1017.5 247.4 L1012.6 241.8"/><path d="M1070.0 247.4 L1063.6 254.6 L1055.8 260.0 L1046.9 263.4 L1037.6 264.6 L1028.2 263.4 L1019.4 260.0 L1011.5 254.6 L1005.1 247.4"/><path d="M615.0 153.7 L605.1 151.2 L597.0 147.4 L591.3 142.6 L588.5 137.2 L588.8 131.6 L592.1 126.2 L598.2 121.6 L606.7 117.9"/><path d="M611.3 159.4 L598.4 156.1 L587.9 151.2 L580.5 144.9 L576.8 137.9 L577.2 130.6 L581.5 123.6 L589.5 117.6 L600.5 112.9"/><path d="M771.7 114.6 L776.6 113.7 L781.5 114.1 L786.2 115.9 L790.4 118.9 L793.9 123.0 L796.5 128.0 L798.0 133.5 L798.3 139.3" stroke-dasharray="3 6"/><path d="M769.9 107.6 L776.3 106.3 L782.7 106.9 L788.8 109.2 L794.3 113.1 L798.9 118.5 L802.2 125.0 L804.2 132.2 L804.6 139.7"/><path d="M768.1 100.6 L776.0 99.0 L783.9 99.7 L791.4 102.5 L798.2 107.4 L803.8 114.0 L807.9 121.9 L810.3 130.8 L810.8 140.1"/><path d="M766.4 93.5 L775.7 91.7 L785.1 92.5 L794.0 95.9 L802.1 101.6 L808.7 109.5 L813.6 118.9 L816.4 129.4 L817.1 140.5"/><path d="M1471.1 261.4 L1470.0 259.4 L1469.7 257.4 L1470.2 255.3 L1471.5 253.5 L1473.5 251.9 L1476.0 250.6 L1478.9 249.9 L1482.0 249.6"/><path d="M1467.8 262.5 L1466.4 260.0 L1466.1 257.3 L1466.7 254.6 L1468.4 252.2 L1471.0 250.1 L1474.2 248.5 L1478.0 247.5 L1482.0 247.2"/><path d="M1464.6 263.6 L1462.9 260.5 L1462.4 257.2 L1463.2 253.9 L1465.3 250.9 L1468.4 248.4 L1472.4 246.4 L1477.1 245.2 L1482.0 244.8"/><path d="M1188.1 189.0 L1178.0 186.5 L1170.7 182.3 L1167.2 176.9 L1167.9 171.3 L1172.9 166.2 L1181.3 162.5 L1191.9 160.7 L1203.1 161.1" stroke-dasharray="3 6"/><path d="M1185.8 193.2 L1172.8 189.9 L1163.3 184.4 L1158.6 177.5 L1159.6 170.1 L1166.1 163.6 L1177.1 158.8 L1190.9 156.4 L1205.3 157.0"/><path d="M1183.6 197.4 L1167.6 193.4 L1155.8 186.6 L1150.1 178.0 L1151.4 169.0 L1159.3 160.9 L1172.8 155.0 L1189.8 152.2 L1207.6 152.8"/><path d="M1181.3 201.6 L1162.3 196.8 L1148.4 188.7 L1141.6 178.6 L1143.1 167.9 L1152.5 158.3 L1168.6 151.3 L1188.7 147.9 L1209.9 148.6"/><path d="M1637.2 193.4 L1618.6 193.3 L1601.4 188.8 L1587.7 180.5 L1579.4 169.5 L1577.7 157.3 L1582.8 145.5 L1594.0 135.7 L1609.8 129.2" stroke-dasharray="3 6"/><path d="M1639.9 203.3 L1615.8 203.2 L1593.3 197.3 L1575.5 186.6 L1564.8 172.3 L1562.6 156.4 L1569.2 141.0 L1583.7 128.3 L1604.2 119.8"/><path d="M1642.6 213.1 L1612.9 213.0 L1585.3 205.9 L1563.4 192.6 L1550.2 175.0 L1547.5 155.4 L1555.6 136.5 L1573.5 120.8 L1598.7 110.5"/><path d="M1645.3 223.0 L1610.1 222.9 L1577.2 214.4 L1551.2 198.6 L1535.6 177.7 L1532.4 154.5 L1542.0 132.1 L1563.2 113.4 L1593.2 101.1"/><path d="M1040.5 343.1 L1035.3 353.6 L1027.4 361.7 L1017.7 366.6 L1007.1 367.7 L996.8 364.9 L987.7 358.6 L980.9 349.4 L976.9 338.2"/><path d="M340.6 355.5 L338.6 357.4 L335.8 359.0 L332.3 360.1 L328.4 360.7 L324.4 360.7 L320.5 360.1 L317.0 359.1 L314.1 357.5"/><path d="M344.9 356.5 L342.3 358.9 L338.6 360.9 L334.1 362.4 L329.1 363.1 L323.8 363.1 L318.8 362.4 L314.2 361.0 L310.5 359.1"/><path d="M349.1 357.4 L346.0 360.4 L341.5 362.9 L335.9 364.6 L329.7 365.6 L323.3 365.6 L317.0 364.7 L311.4 363.0 L306.8 360.6"/><path d="M1242.5 397.2 L1219.5 400.5 L1196.6 396.7 L1177.8 386.4 L1166.4 371.5 L1164.2 354.4 L1171.8 338.1 L1187.8 325.6 L1209.4 318.8"/><path d="M448.1 302.1 L445.5 291.4 L444.7 280.3 L445.6 269.2 L448.1 258.5 L452.2 248.5 L457.7 239.6 L464.6 232.0 L472.4 225.9" stroke-dasharray="3 6"/><path d="M568.3 363.5 L564.7 364.1 L561.1 363.6 L557.7 362.1 L554.8 359.6 L552.4 356.3 L550.8 352.5 L550.1 348.3 L550.3 344.0"/><path d="M569.5 368.4 L564.8 369.1 L560.1 368.5 L555.7 366.6 L551.8 363.3 L548.8 359.1 L546.7 354.1 L545.8 348.7 L546.1 343.1"/><path d="M570.6 373.3 L564.9 374.2 L559.1 373.5 L553.7 371.0 L548.9 367.1 L545.2 361.9 L542.6 355.7 L541.5 349.0 L541.8 342.2"/><path d="M571.8 378.2 L564.9 379.3 L558.1 378.4 L551.6 375.5 L546.0 370.8 L541.5 364.6 L538.5 357.3 L537.2 349.4 L537.6 341.3"/><path d="M93.8 279.8 L92.9 276.0 L93.0 272.2 L94.1 268.4 L96.3 265.1 L99.3 262.2 L103.0 260.1 L107.2 258.9 L111.6 258.6"/><path d="M88.6 281.4 L87.4 276.5 L87.6 271.4 L89.1 266.6 L91.9 262.2 L95.8 258.5 L100.7 255.8 L106.1 254.2 L111.8 253.8"/><path d="M83.5 283.0 L82.0 276.9 L82.2 270.7 L84.1 264.8 L87.5 259.4 L92.4 254.9 L98.3 251.5 L105.0 249.5 L112.0 249.0"/><path d="M78.4 284.6 L76.6 277.4 L76.8 270.0 L79.0 262.9 L83.1 256.5 L88.9 251.2 L95.9 247.2 L103.8 244.8 L112.2 244.2"/><path d="M60.7 202.3 L58.0 210.1 L54.2 217.5 L49.3 224.1 L43.5 229.8 L36.8 234.4 L29.6 237.9 L21.8 240.2 L13.9 241.2" stroke-dasharray="3 6"/><path d="M394.4 326.7 L372.7 320.8 L356.3 308.8 L348.0 292.9 L349.3 275.9 L360.1 260.8 L378.3 250.4 L400.7 246.4 L423.4 249.6"/><path d="M392.1 338.7 L363.9 331.0 L342.6 315.5 L331.8 294.8 L333.5 272.7 L347.5 253.1 L371.2 239.5 L400.4 234.3 L429.9 238.4"/><path d="M389.8 350.6 L355.2 341.2 L328.8 322.1 L315.6 296.7 L317.7 269.4 L334.9 245.3 L364.0 228.6 L400.0 222.2 L436.3 227.3"/><path d="M1233.9 230.9 L1251.8 230.7 L1268.9 234.5 L1283.5 241.9 L1294.0 252.2 L1299.4 264.3 L1299.0 277.0 L1293.1 289.0 L1282.1 299.0"/><path d="M33.1 126.9 L34.4 136.7 L33.6 146.6 L30.5 155.9 L25.5 164.0 L19.0 170.3 L11.2 174.4 L2.8 176.1 L-5.7 175.1" stroke-dasharray="3 6"/><path d="M42.5 123.6 L44.2 136.4 L43.1 149.3 L39.2 161.4 L32.7 171.9 L24.1 180.1 L14.0 185.4 L3.1 187.5 L-7.9 186.3"/><path d="M51.9 120.3 L54.0 136.1 L52.6 151.9 L47.8 166.8 L39.8 179.8 L29.3 189.9 L16.9 196.4 L3.4 199.0 L-10.1 197.5"/><path d="M61.3 117.0 L63.8 135.7 L62.2 154.6 L56.5 172.3 L47.0 187.6 L34.5 199.6 L19.7 207.4 L3.8 210.5 L-12.4 208.6"/><path d="M1392.2 101.3 L1394.6 105.1 L1395.2 109.2 L1394.0 113.2 L1390.9 116.9 L1386.1 120.2 L1380.0 122.8 L1372.9 124.6 L1365.1 125.5"/><path d="M1401.4 99.1 L1404.6 104.1 L1405.4 109.4 L1403.7 114.6 L1399.7 119.5 L1393.5 123.7 L1385.6 127.1 L1376.3 129.4 L1366.1 130.6"/><path d="M1009.4 146.9 L1013.5 147.8 L1017.3 149.2 L1020.7 151.1 L1023.7 153.4 L1026.0 156.1 L1027.7 159.0 L1028.8 162.1 L1029.1 165.3" stroke-dasharray="3 6"/><path d="M1010.9 141.4 L1016.2 142.6 L1021.1 144.5 L1025.6 146.9 L1029.4 150.0 L1032.5 153.4 L1034.7 157.2 L1036.1 161.2 L1036.5 165.4"/><path d="M380.9 96.5 L377.7 94.1 L375.9 90.8 L375.8 87.0 L377.5 83.7 L380.6 81.2 L384.6 80.1 L388.8 80.7 L392.3 82.7"/><path d="M412.4 83.7 L415.9 83.3 L419.5 83.8 L422.8 85.2 L425.5 87.2 L427.4 89.8 L428.5 92.7 L428.5 95.8 L427.6 98.7" stroke-dasharray="3 6"/><path d="M411.4 80.5 L416.0 80.0 L420.7 80.7 L424.9 82.4 L428.4 85.0 L431.0 88.4 L432.3 92.2 L432.4 96.2 L431.2 100.0"/><path d="M410.4 77.3 L416.1 76.7 L421.8 77.5 L427.1 79.6 L431.4 82.9 L434.5 87.0 L436.2 91.7 L436.3 96.6 L434.8 101.3"/><path d="M409.4 74.1 L416.2 73.4 L423.0 74.4 L429.2 76.9 L434.4 80.7 L438.1 85.6 L440.1 91.2 L440.1 97.0 L438.3 102.6"/><path d="M755.8 310.9 L762.8 313.1 L768.5 317.3 L772.0 323.0 L773.0 329.4 L771.2 335.7 L767.0 341.1 L760.9 344.7 L753.7 346.2"/><path d="M756.7 305.7 L765.8 308.4 L773.2 313.9 L777.8 321.3 L779.0 329.7 L776.8 337.9 L771.3 344.8 L763.3 349.6 L754.0 351.5"/><path d="M757.6 300.4 L768.8 303.8 L777.9 310.5 L783.5 319.7 L785.1 330.0 L782.3 340.1 L775.6 348.6 L765.8 354.4 L754.2 356.8"/><path d="M473.9 260.8 L468.0 262.1 L461.9 262.0 L456.1 260.6 L450.6 257.9 L445.9 254.1 L442.1 249.3 L439.5 243.7 L438.1 237.8" stroke-dasharray="3 6"/><path d="M476.5 268.8 L468.8 270.4 L460.9 270.3 L453.3 268.5 L446.2 265.0 L440.1 260.0 L435.2 253.7 L431.8 246.5 L430.0 238.8"/><path d="M443.7 342.9 L439.9 342.6 L436.2 341.9 L432.8 340.8 L430.1 339.3 L428.0 337.5 L426.6 335.5 L426.1 333.3 L426.5 331.2"/><path d="M1089.3 347.3 L1093.5 349.9 L1096.2 353.5 L1097.0 357.8 L1095.8 362.0 L1092.8 365.5 L1088.4 367.8 L1083.3 368.5 L1078.2 367.5"/><path d="M1473.2 128.9 L1475.0 130.0 L1476.6 131.5 L1477.7 133.2 L1478.5 135.0 L1478.8 137.0 L1478.7 139.0 L1478.2 141.0 L1477.2 142.8" stroke-dasharray="3 6"/><path d="M1474.7 126.3 L1477.1 127.8 L1479.1 129.7 L1480.6 131.9 L1481.6 134.3 L1482.0 136.9 L1481.9 139.5 L1481.2 142.0 L1479.9 144.3"/><path d="M770.6 180.1 L759.2 192.3 L745.1 199.7 L729.7 201.6 L714.5 197.7 L701.2 188.4 L691.1 174.7 L685.3 158.1 L684.2 140.1"/><path d="M782.0 190.5 L767.2 206.4 L748.9 216.0 L728.8 218.4 L709.2 213.4 L691.9 201.3 L678.7 183.5 L671.1 161.9 L669.8 138.5"/><path d="M34.4 171.5 L32.9 175.6 L30.3 178.7 L27.0 180.6 L23.3 180.9 L19.7 179.6 L16.8 176.9 L14.9 173.2 L14.1 168.8"/><path d="M1392.5 200.6 L1390.2 204.0 L1387.3 207.1 L1383.9 209.6 L1380.2 211.7 L1376.1 213.1 L1371.9 214.0 L1367.5 214.1 L1363.2 213.7"/><path d="M1399.8 204.2 L1396.7 208.7 L1393.0 212.6 L1388.6 215.9 L1383.7 218.6 L1378.4 220.5 L1372.9 221.6 L1367.2 221.8 L1361.6 221.2"/><path d="M1407.0 207.8 L1403.2 213.3 L1398.6 218.2 L1393.2 222.3 L1387.2 225.5 L1380.7 227.8 L1373.9 229.2 L1367.0 229.5 L1360.1 228.7"/><path d="M1414.2 211.4 L1409.8 217.9 L1404.3 223.7 L1397.9 228.6 L1390.7 232.4 L1383.0 235.2 L1375.0 236.8 L1366.7 237.1 L1358.5 236.3"/><path d="M50.5 80.0 L54.6 77.5 L59.2 75.6 L64.1 74.5 L69.1 74.1 L74.1 74.6 L78.9 75.8 L83.4 77.7 L87.5 80.3" stroke-dasharray="3 6"/><path d="M45.0 74.2 L50.4 70.9 L56.3 68.5 L62.6 67.0 L69.1 66.5 L75.6 67.1 L81.9 68.7 L87.8 71.2 L93.1 74.6"/><path d="M39.5 68.4 L46.1 64.3 L53.4 61.3 L61.2 59.5 L69.2 59.0 L77.2 59.7 L85.0 61.6 L92.2 64.7 L98.7 68.8"/><path d="M655.7 178.0 L649.3 173.5 L644.4 166.9 L641.5 158.8 L640.9 150.1 L642.6 141.6 L646.5 134.2 L652.1 128.4 L659.0 125.0"/><path d="M652.9 185.8 L644.6 179.9 L638.3 171.3 L634.5 160.8 L633.7 149.5 L635.9 138.5 L640.9 128.8 L648.3 121.3 L657.2 116.9"/><path d="M650.2 193.6 L640.0 186.3 L632.2 175.7 L627.5 162.8 L626.5 148.9 L629.3 135.3 L635.4 123.3 L644.5 114.2 L655.5 108.7"/><path d="M647.4 201.3 L635.3 192.7 L626.0 180.1 L620.6 164.8 L619.4 148.3 L622.6 132.2 L629.9 117.9 L640.6 107.1 L653.7 100.6"/><path d="M-47.1 322.3 L-54.1 311.6 L-57.8 299.6 L-58.1 287.0 L-54.9 274.8 L-48.4 263.9 L-39.1 254.9 L-27.7 248.6 L-14.9 245.4"/><path d="M-58.7 331.3 L-67.7 317.4 L-72.5 301.7 L-72.9 285.4 L-68.7 269.6 L-60.3 255.3 L-48.2 243.7 L-33.4 235.5 L-16.8 231.3"/><path d="M-70.2 340.3 L-81.3 323.2 L-87.3 303.9 L-87.7 283.8 L-82.6 264.3 L-72.2 246.8 L-57.4 232.5 L-39.1 222.4 L-18.7 217.3"/><path d="M-81.7 349.3 L-94.9 329.0 L-102.0 306.1 L-102.5 282.2 L-96.4 259.1 L-84.1 238.3 L-66.5 221.3 L-44.8 209.3 L-20.5 203.2"/><path d="M1548.3 166.2 L1556.3 175.5 L1560.7 186.1 L1561.2 197.3 L1557.6 208.1 L1550.3 217.8 L1539.9 225.4 L1527.2 230.5 L1513.2 232.6" stroke-dasharray="3 6"/><path d="M4.1 94.2 L16.9 81.5 L35.1 74.0 L55.7 72.9 L75.2 78.3 L90.1 89.4 L98.0 104.2 L97.5 120.3 L88.7 134.8"/><path d="M-9.3 89.0 L7.3 72.6 L31.0 62.8 L57.8 61.3 L83.0 68.4 L102.5 82.8 L112.7 102.1 L112.1 122.9 L100.6 141.8"/><path d="M238.1 177.6 L230.6 185.5 L221.5 190.6 L211.4 192.4 L201.3 190.9 L192.0 186.1 L184.4 178.5 L178.9 168.6 L176.1 157.4"/><path d="M246.3 185.2 L236.5 195.5 L224.6 202.1 L211.6 204.5 L198.5 202.5 L186.4 196.3 L176.4 186.4 L169.3 173.6 L165.7 158.9"/><path d="M474.7 323.6 L471.9 321.5 L469.9 318.6 L468.7 315.0 L468.6 311.3 L469.6 307.6 L471.5 304.6 L474.2 302.4 L477.4 301.2"/><path d="M1526.6 219.5 L1536.9 221.7 L1546.2 225.2 L1554.0 229.7 L1560.1 235.2 L1564.2 241.4 L1566.0 247.9 L1565.6 254.6 L1562.8 261.0"/><path d="M1530.0 210.4 L1543.4 213.2 L1555.4 217.7 L1565.7 223.7 L1573.6 230.8 L1578.9 238.8 L1581.3 247.4 L1580.6 256.0 L1577.0 264.3"/><path d="M1367.0 121.4 L1368.2 117.6 L1370.6 114.1 L1374.1 111.3 L1378.4 109.3 L1383.2 108.2 L1388.2 108.1 L1393.1 109.0 L1397.5 110.8" stroke-dasharray="3 6"/><path d="M1361.2 120.9 L1362.8 115.9 L1365.9 111.5 L1370.4 107.8 L1376.0 105.1 L1382.3 103.7 L1388.8 103.6 L1395.1 104.7 L1400.9 107.1"/><path d="M1639.5 289.7 L1644.0 294.4 L1646.8 300.5 L1647.6 307.3 L1646.3 314.1 L1643.1 319.9 L1638.2 324.2 L1632.4 326.4 L1626.3 326.3"/><path d="M1642.4 284.6 L1648.3 290.8 L1651.9 298.7 L1653.0 307.6 L1651.3 316.3 L1647.1 323.9 L1640.8 329.5 L1633.3 332.4 L1625.3 332.3"/><path d="M1645.4 279.6 L1652.6 287.1 L1657.1 296.9 L1658.4 307.8 L1656.3 318.6 L1651.1 328.0 L1643.4 334.8 L1634.1 338.4 L1624.3 338.2"/><path d="M149.8 276.1 L141.1 271.8 L133.9 265.4 L128.9 257.4 L126.2 248.5 L126.2 239.2 L128.9 230.3 L134.0 222.3 L141.2 215.9"/><path d="M146.0 285.8 L134.7 280.1 L125.4 271.8 L118.8 261.5 L115.3 249.9 L115.4 237.8 L118.8 226.2 L125.4 215.8 L134.8 207.6"/><path d="M142.2 295.5 L128.3 288.5 L116.8 278.3 L108.7 265.5 L104.5 251.2 L104.5 236.4 L108.7 222.1 L116.9 209.4 L128.4 199.2"/><path d="M138.4 305.1 L121.9 296.9 L108.3 284.7 L98.6 269.6 L93.6 252.6 L93.6 235.0 L98.6 218.0 L108.3 202.9 L122.0 190.8"/><path d="M663.6 177.0 L660.1 186.0 L651.0 193.2 L637.8 197.3 L623.1 197.6 L609.6 194.0 L599.8 187.2 L595.4 178.4 L597.3 169.3"/><path d="M673.9 177.2 L669.4 188.8 L657.4 198.1 L640.4 203.5 L621.3 203.9 L603.7 199.2 L590.8 190.3 L585.2 178.9 L587.7 167.1"/><path d="M684.1 177.3 L678.6 191.6 L663.9 203.1 L642.9 209.7 L619.4 210.2 L597.7 204.4 L581.9 193.5 L574.9 179.5 L578.0 164.9"/><path d="M694.4 177.5 L687.8 194.4 L670.4 208.1 L645.4 215.9 L617.5 216.5 L591.8 209.6 L573.0 196.7 L564.7 180.0 L568.4 162.7"/><path d="M1242.0 299.5 L1241.5 295.9 L1242.1 292.4 L1243.7 288.9 L1246.3 285.7 L1249.7 282.8 L1254.0 280.4 L1258.8 278.5 L1264.1 277.1" stroke-dasharray="3 6"/><path d="M1232.5 300.5 L1232.0 295.9 L1232.7 291.2 L1234.8 286.7 L1238.2 282.6 L1242.7 278.8 L1248.1 275.7 L1254.5 273.2 L1261.4 271.4"/><path d="M1223.1 301.5 L1222.4 295.8 L1223.4 290.1 L1225.9 284.6 L1230.0 279.4 L1235.6 274.8 L1242.3 270.9 L1250.1 267.8 L1258.6 265.7"/><path d="M1213.7 302.5 L1212.9 295.7 L1214.0 288.9 L1217.0 282.4 L1221.9 276.3 L1228.5 270.8 L1236.5 266.2 L1245.7 262.5 L1255.9 260.0"/><path d="M621.5 311.0 L619.3 316.7 L616.0 322.0 L611.8 326.6 L606.7 330.4 L601.0 333.2 L594.9 334.9 L588.5 335.5 L582.1 335.0"/><path d="M631.4 313.5 L628.6 321.0 L624.3 327.8 L618.8 333.8 L612.2 338.7 L604.8 342.4 L596.8 344.6 L588.5 345.4 L580.2 344.7"/><path d="M641.4 315.9 L637.8 325.2 L632.6 333.6 L625.8 341.0 L617.7 347.0 L608.6 351.5 L598.7 354.3 L588.5 355.2 L578.3 354.3"/><path d="M1289.7 224.7 L1287.3 221.4 L1286.7 217.6 L1288.1 213.9 L1291.0 211.0 L1295.2 209.3 L1299.7 209.3 L1303.9 210.8 L1306.9 213.7" stroke-dasharray="3 6"/><path d="M1723.4 278.6 L1722.9 287.9 L1718.3 296.7 L1709.9 304.3 L1698.4 310.1 L1684.8 313.5 L1670.2 314.3 L1655.9 312.3 L1643.0 307.9"/><path d="M1738.4 277.5 L1737.8 289.6 L1731.8 301.1 L1720.8 311.0 L1705.9 318.4 L1688.2 322.8 L1669.2 323.8 L1650.6 321.3 L1633.9 315.6"/><path d="M1125.2 265.6 L1128.3 262.4 L1132.0 259.9 L1136.1 258.5 L1140.4 258.0 L1144.7 258.6 L1148.8 260.2 L1152.4 262.7 L1155.5 266.0"/><path d="M1120.7 261.6 L1124.7 257.3 L1129.5 254.2 L1134.9 252.3 L1140.5 251.7 L1146.1 252.4 L1151.4 254.5 L1156.1 257.8 L1160.1 262.1"/><path d="M1116.2 257.5 L1121.2 252.3 L1127.1 248.4 L1133.7 246.1 L1140.6 245.3 L1147.4 246.3 L1153.9 248.8 L1159.8 252.9 L1164.6 258.2"/><path d="M1495.7 205.5 L1495.9 197.5 L1498.2 190.1 L1502.5 183.9 L1508.1 179.5 L1514.7 177.5 L1521.4 178.1 L1527.7 181.0 L1532.9 186.2"/><path d="M1489.3 206.4 L1489.6 196.1 L1492.7 186.4 L1498.2 178.3 L1505.6 172.7 L1514.1 170.1 L1522.9 170.8 L1531.0 174.6 L1537.7 181.3"/><path d="M524.9 76.5 L526.3 80.1 L525.5 83.8 L522.9 87.0 L518.5 89.6 L513.0 91.1 L507.0 91.3 L501.3 90.3 L496.4 88.2"/><path d="M529.7 75.3 L531.5 79.9 L530.6 84.7 L527.1 89.0 L521.4 92.3 L514.3 94.2 L506.5 94.5 L499.0 93.2 L492.6 90.5"/><path d="M1352.6 126.8 L1365.4 135.2 L1370.4 145.8 L1366.8 156.5 L1355.1 165.4 L1337.7 170.9 L1317.4 172.1 L1298.1 168.7 L1283.2 161.3"/><path d="M357.2 264.0 L348.7 253.3 L343.2 240.7 L341.0 227.1 L342.3 213.5 L346.9 200.6 L354.7 189.3 L365.0 180.5 L377.3 174.6"/><path d="M346.3 275.5 L335.2 261.6 L328.1 245.3 L325.2 227.7 L326.9 209.9 L333.0 193.1 L343.1 178.5 L356.5 167.0 L372.4 159.3"/><path d="M578.4 272.4 L583.5 272.6 L588.4 273.2 L593.2 274.3 L597.5 276.0 L601.4 278.0 L604.7 280.4 L607.4 283.1 L609.2 286.0"/><path d="M578.0 266.6 L584.6 266.8 L591.1 267.6 L597.2 269.1 L602.9 271.2 L607.9 273.9 L612.2 277.0 L615.7 280.5 L618.1 284.3"/><path d="M577.6 260.8 L585.7 261.0 L593.7 262.1 L601.3 263.9 L608.3 266.5 L614.5 269.7 L619.8 273.6 L624.0 277.9 L627.0 282.6"/><path d="M535.5 312.8 L544.3 332.3 L546.5 354.2 L541.8 375.5 L530.9 393.5 L515.2 406.0 L496.6 411.3 L477.6 408.6 L460.7 398.5"/><path d="M548.2 301.6 L559.6 327.0 L562.4 355.4 L556.3 383.1 L542.2 406.5 L521.7 422.7 L497.6 429.6 L472.9 426.2 L450.9 413.0"/><path d="M241.0 232.7 L244.1 236.8 L246.2 241.4 L247.3 246.2 L247.2 251.1 L246.2 256.0 L244.1 260.5 L241.0 264.7 L237.1 268.3" stroke-dasharray="3 6"/><path d="M-18.2 82.6 L-22.2 80.4 L-25.3 77.6 L-27.3 74.6 L-28.1 71.4 L-27.7 68.1 L-26.1 65.0 L-23.4 62.1 L-19.7 59.7"/><path d="M-23.1 86.2 L-28.3 83.2 L-32.3 79.7 L-35.0 75.7 L-36.0 71.5 L-35.5 67.3 L-33.5 63.3 L-30.0 59.5 L-25.2 56.3"/><path d="M341.3 243.4 L343.4 247.5 L343.9 251.7 L342.8 256.0 L340.2 259.9 L336.2 263.5 L331.0 266.4 L324.8 268.6 L318.0 269.9" stroke-dasharray="3 6"/><path d="M85.6 84.8 L100.5 91.8 L109.8 102.5 L111.9 114.9 L106.3 126.7 L94.1 135.9 L77.4 140.8 L59.3 140.5 L43.1 135.0" stroke-dasharray="3 6"/><path d="M90.4 76.6 L109.8 85.8 L121.9 99.7 L124.6 115.8 L117.4 131.2 L101.4 143.1 L79.8 149.5 L56.3 149.0 L35.1 141.9"/><path d="M95.2 68.5 L119.1 79.7 L134.0 96.8 L137.3 116.7 L128.4 135.6 L108.8 150.3 L82.2 158.1 L53.2 157.6 L27.2 148.8"/><path d="M943.7 239.3 L944.1 232.6 L946.0 226.1 L949.4 220.1 L954.0 214.8 L959.8 210.3 L966.5 207.0 L973.8 204.8 L981.5 203.9" stroke-dasharray="3 6"/><path d="M877.9 176.9 L880.9 177.3 L883.8 178.0 L886.4 178.9 L888.8 180.0 L890.8 181.3 L892.4 182.8 L893.6 184.3 L894.3 186.0"/><path d="M879.0 173.7 L882.9 174.2 L886.6 175.1 L890.1 176.3 L893.1 177.7 L895.7 179.4 L897.8 181.3 L899.4 183.3 L900.4 185.4"/><path d="M179.7 101.6 L193.1 95.5 L208.1 94.1 L222.6 97.7 L234.6 105.6 L242.1 116.8 L244.3 129.6 L240.6 142.1 L231.8 152.6" stroke-dasharray="3 6"/><path d="M172.3 93.7 L189.6 85.8 L209.1 84.0 L228.0 88.6 L243.5 98.9 L253.4 113.5 L256.1 130.1 L251.4 146.4 L239.9 160.0"/><path d="M164.8 85.8 L186.1 76.0 L210.2 73.9 L233.4 79.5 L252.5 92.3 L264.6 110.1 L268.0 130.6 L262.2 150.7 L248.0 167.4"/><path d="M10.6 259.8 L10.8 241.6 L16.5 224.3 L27.1 209.4 L41.6 198.5 L58.7 192.5 L76.8 191.8 L94.2 196.7 L109.4 206.7"/><path d="M-7.2 262.3 L-6.9 238.6 L0.5 216.1 L14.3 196.8 L33.1 182.6 L55.4 174.7 L78.9 173.9 L101.6 180.3 L121.4 193.2"/><path d="M-24.9 264.8 L-24.5 235.6 L-15.4 207.9 L1.5 184.2 L24.7 166.7 L52.1 157.0 L81.0 156.0 L109.0 163.9 L133.3 179.8"/><path d="M-42.6 267.3 L-42.2 232.7 L-31.4 199.7 L-11.3 171.6 L16.3 150.8 L48.7 139.3 L83.2 138.1 L116.3 147.4 L145.2 166.3"/><path d="M1248.7 242.5 L1240.4 242.9 L1232.0 242.1 L1224.0 240.1 L1216.6 237.0 L1210.0 232.8 L1204.4 227.7 L1200.0 221.8 L1197.0 215.4" stroke-dasharray="3 6"/><path d="M167.3 393.3 L158.2 391.6 L149.5 388.1 L141.3 383.0 L134.0 376.4 L127.8 368.5 L122.7 359.5 L119.0 349.7 L116.7 339.3"/><path d="M165.9 412.8 L154.1 410.5 L142.7 405.9 L132.1 399.3 L122.6 390.7 L114.5 380.5 L107.9 368.8 L103.0 356.0 L100.1 342.5"/><path d="M164.5 432.2 L149.9 429.4 L135.9 423.8 L122.9 415.6 L111.2 405.1 L101.2 392.5 L93.1 378.1 L87.1 362.4 L83.5 345.7"/><path d="M163.1 451.7 L145.8 448.3 L129.2 441.7 L113.7 432.0 L99.8 419.5 L87.9 404.5 L78.3 387.4 L71.2 368.7 L66.9 349.0"/><path d="M1192.2 318.0 L1197.9 334.3 L1194.1 350.8 L1181.4 364.9 L1161.8 374.3 L1138.5 377.4 L1115.4 373.8 L1096.3 363.9 L1084.2 349.6" stroke-dasharray="3 6"/><path d="M280.0 360.3 L260.1 365.2 L238.9 364.5 L219.9 358.4 L206.3 348.0 L200.4 334.9 L203.1 321.4 L214.1 309.7 L231.5 301.9" stroke-dasharray="3 6"/><path d="M288.4 368.7 L262.6 375.0 L235.0 374.2 L210.3 366.3 L192.6 352.7 L184.9 335.7 L188.5 318.1 L202.8 302.9 L225.3 292.7"/><path d="M296.7 377.1 L265.0 384.9 L231.1 383.8 L200.7 374.1 L178.9 357.4 L169.4 336.4 L173.8 314.8 L191.4 296.1 L219.2 283.6"/><path d="M305.1 385.5 L267.4 394.7 L227.1 393.5 L191.0 381.9 L165.2 362.0 L153.9 337.2 L159.2 311.5 L180.0 289.3 L213.0 274.4"/><path d="M505.7 90.7 L524.1 87.4 L542.6 90.1 L559.1 98.5 L571.7 111.5 L578.9 127.8 L579.9 145.4 L574.6 162.4 L563.6 176.6"/><path d="M499.9 76.1 L523.8 71.8 L547.9 75.3 L569.4 86.2 L585.7 103.2 L595.1 124.4 L596.4 147.3 L589.4 169.3 L575.1 187.8"/><path d="M494.1 61.5 L523.5 56.2 L553.2 60.5 L579.6 73.9 L599.7 94.8 L611.2 120.9 L612.8 149.1 L604.3 176.2 L586.6 199.0"/><path d="M488.2 46.9 L523.2 40.6 L558.4 45.7 L589.8 61.6 L613.7 86.5 L627.4 117.4 L629.3 150.9 L619.1 183.1 L598.2 210.2"/><path d="M780.1 222.7 L780.4 223.6 L780.3 224.6 L779.8 225.5 L779.0 226.3 L777.8 227.0 L776.4 227.6 L774.8 228.0 L773.0 228.2"/><path d="M782.5 222.3 L782.9 223.5 L782.8 224.8 L782.2 225.9 L781.1 227.0 L779.6 227.9 L777.7 228.7 L775.6 229.2 L773.3 229.5"/><path d="M670.1 244.5 L668.1 248.5 L664.9 252.3 L660.8 255.6 L655.7 258.4 L649.9 260.6 L643.5 262.1 L636.8 262.8 L630.0 262.8"/><path d="M681.1 245.9 L678.5 251.2 L674.4 256.0 L668.9 260.4 L662.3 264.0 L654.8 266.8 L646.5 268.8 L637.8 269.8 L629.0 269.8"/><path d="M549.8 106.4 L552.9 106.1 L556.0 106.3 L558.8 107.1 L561.0 108.3 L562.3 109.8 L562.6 111.4 L561.9 113.1 L560.3 114.5"/><path d="M84.5 215.1 L93.2 222.1 L98.6 232.1 L99.9 243.7 L96.8 254.8 L89.9 263.8 L80.2 269.1 L69.4 269.8 L59.2 265.9" stroke-dasharray="3 6"/><path d="M87.9 207.3 L99.2 216.3 L106.3 229.4 L108.0 244.4 L103.9 258.9 L94.9 270.5 L82.3 277.4 L68.3 278.4 L55.0 273.3"/><path d="M91.3 199.4 L105.3 210.5 L113.9 226.7 L116.0 245.1 L111.1 263.0 L100.0 277.3 L84.5 285.7 L67.2 286.9 L50.8 280.7"/><path d="M94.7 191.6 L111.3 204.8 L121.6 223.9 L124.0 245.9 L118.2 267.1 L105.0 284.1 L86.6 294.1 L66.0 295.5 L46.6 288.1"/><path d="M152.2 123.7 L155.9 125.7 L157.8 128.3 L157.8 131.1 L155.8 133.6 L152.2 135.6 L147.4 136.7 L142.1 136.8 L137.1 135.9"/><path d="M154.6 122.0 L159.3 124.5 L161.9 127.9 L161.9 131.5 L159.3 134.8 L154.5 137.4 L148.3 138.8 L141.4 139.0 L135.0 137.7"/><path d="M157.0 120.2 L162.8 123.4 L166.0 127.5 L165.9 131.9 L162.8 136.0 L156.9 139.2 L149.2 141.0 L140.8 141.1 L132.9 139.6"/><path d="M767.1 153.5 L755.9 149.0 L746.3 142.0 L738.7 133.0 L733.7 122.5 L731.5 111.2 L732.3 99.7 L736.1 88.7 L742.5 78.9" stroke-dasharray="3 6"/><path d="M763.0 167.0 L748.5 161.1 L736.0 152.1 L726.2 140.4 L719.6 126.7 L716.8 112.0 L717.8 97.0 L722.7 82.8 L731.0 70.1"/><path d="M758.9 180.5 L741.1 173.3 L725.7 162.1 L713.6 147.7 L705.6 130.9 L702.1 112.8 L703.3 94.4 L709.3 76.8 L719.6 61.2"/><path d="M382.1 182.9 L366.9 174.0 L358.0 161.1 L356.9 146.6 L363.8 133.1 L377.5 122.9 L395.5 118.0 L414.6 119.2 L431.4 126.2"/><path d="M376.2 192.2 L356.5 180.6 L344.9 163.9 L343.5 145.0 L352.4 127.4 L370.3 114.2 L393.7 107.8 L418.5 109.3 L440.3 118.5"/><path d="M370.4 201.4 L346.1 187.2 L331.8 166.7 L330.1 143.5 L341.1 121.8 L363.0 105.5 L391.9 97.6 L422.5 99.5 L449.3 110.8"/><path d="M1027.7 55.5 L1034.8 57.1 L1041.1 60.0 L1046.4 64.1 L1050.3 69.1 L1052.4 74.8 L1052.8 80.7 L1051.4 86.5 L1048.2 91.8"/><path d="M1029.0 48.4 L1038.2 50.5 L1046.4 54.3 L1053.3 59.6 L1058.3 66.2 L1061.1 73.5 L1061.6 81.2 L1059.8 88.7 L1055.7 95.7"/><path d="M1153.9 320.5 L1151.1 312.8 L1151.6 304.8 L1155.5 297.3 L1162.4 291.0 L1171.6 286.4 L1182.4 283.9 L1193.7 283.7 L1204.6 286.0" stroke-dasharray="3 6"/><path d="M-19.1 244.9 L-28.5 247.6 L-38.3 247.3 L-47.5 244.1 L-55.6 238.1 L-61.6 230.0 L-65.2 220.4 L-66.0 210.1 L-64.0 200.0"/><path d="M-15.1 254.6 L-27.3 258.2 L-40.0 257.8 L-52.1 253.6 L-62.5 245.9 L-70.3 235.3 L-75.0 222.8 L-76.0 209.4 L-73.4 196.3"/><path d="M-11.0 264.4 L-26.1 268.7 L-41.7 268.3 L-56.6 263.1 L-69.4 253.6 L-79.1 240.6 L-84.8 225.2 L-86.1 208.8 L-82.8 192.6"/><path d="M960.0 174.0 L950.1 174.2 L940.3 172.1 L931.0 167.9 L922.7 161.6 L915.6 153.6 L910.0 144.1 L906.1 133.5 L904.1 122.2"/><path d="M786.1 376.3 L780.5 374.3 L775.7 371.7 L771.7 368.7 L768.8 365.3 L766.9 361.7 L766.1 358.0 L766.5 354.2 L768.1 350.5"/><path d="M661.5 265.8 L659.0 260.1 L659.1 254.2 L661.7 248.5 L666.5 243.7 L673.2 240.1 L681.1 238.2 L689.4 238.0 L697.5 239.6" stroke-dasharray="3 6"/><path d="M654.1 268.4 L650.9 261.0 L651.0 253.2 L654.3 245.9 L660.7 239.6 L669.4 235.0 L679.6 232.4 L690.5 232.2 L700.9 234.3"/><path d="M1552.9 83.3 L1557.1 78.8 L1561.9 75.0 L1567.3 72.1 L1573.2 70.0 L1579.3 68.8 L1585.5 68.6 L1591.6 69.4 L1597.6 71.2"/><path d="M1543.7 76.3 L1549.1 70.4 L1555.4 65.5 L1562.5 61.6 L1570.1 58.9 L1578.0 57.4 L1586.0 57.2 L1594.0 58.2 L1601.8 60.5"/><path d="M1417.1 206.7 L1416.4 197.5 L1420.1 188.6 L1427.7 181.2 L1438.3 176.1 L1450.7 173.9 L1463.3 175.0 L1474.8 179.1 L1483.6 185.8" stroke-dasharray="3 6"/><path d="M1406.4 208.6 L1405.4 196.5 L1410.2 185.0 L1420.1 175.4 L1433.9 168.7 L1450.0 165.9 L1466.5 167.3 L1481.3 172.6 L1492.7 181.3"/><path d="M196.2 237.6 L183.8 239.7 L171.1 239.8 L158.7 237.9 L147.2 234.1 L137.5 228.7 L129.9 221.8 L124.9 214.0 L122.8 205.6"/><path d="M202.0 247.7 L186.0 250.4 L169.4 250.5 L153.2 248.1 L138.4 243.2 L125.6 236.1 L115.8 227.2 L109.3 217.0 L106.7 206.1"/><path d="M1177.7 386.9 L1170.3 380.8 L1164.5 373.4 L1160.5 365.0 L1158.7 356.0 L1159.0 346.9 L1161.4 338.0 L1165.8 329.8 L1172.1 322.7"/><path d="M1169.7 397.2 L1160.1 389.3 L1152.6 379.6 L1147.5 368.7 L1145.0 357.0 L1145.4 345.1 L1148.6 333.6 L1154.4 323.0 L1162.5 313.8"/><path d="M1161.8 407.5 L1149.9 397.7 L1140.6 385.8 L1134.4 372.4 L1131.4 358.0 L1131.9 343.4 L1135.8 329.2 L1142.9 316.1 L1152.9 304.8"/><path d="M1647.9 290.6 L1645.5 293.5 L1642.6 295.6 L1639.3 296.8 L1635.8 296.8 L1632.4 295.9 L1629.4 293.9 L1626.9 291.1 L1625.1 287.7"/><path d="M1651.1 293.4 L1648.0 297.2 L1644.2 299.9 L1639.9 301.4 L1635.4 301.5 L1631.0 300.2 L1627.1 297.7 L1623.8 294.1 L1621.5 289.6"/><path d="M1654.3 296.2 L1650.5 300.9 L1645.8 304.2 L1640.5 306.0 L1634.9 306.1 L1629.6 304.6 L1624.7 301.5 L1620.7 297.0 L1617.8 291.5"/><path d="M1235.5 206.8 L1232.8 209.4 L1229.7 211.4 L1226.1 212.7 L1222.4 213.3 L1218.6 213.2 L1214.9 212.3 L1211.5 210.7 L1208.5 208.4"/><path d="M12.2 315.3 L12.2 320.1 L10.5 324.7 L7.3 328.9 L2.6 332.5 L-3.2 335.3 L-9.8 337.1 L-16.9 337.9 L-24.1 337.5" stroke-dasharray="3 6"/><path d="M21.3 314.6 L21.3 320.8 L19.2 326.7 L15.0 332.2 L8.9 336.9 L1.4 340.5 L-7.3 342.9 L-16.5 343.9 L-25.8 343.5"/><path d="M30.5 313.9 L30.5 321.4 L27.8 328.8 L22.6 335.5 L15.2 341.3 L5.9 345.8 L-4.7 348.7 L-16.1 349.9 L-27.6 349.4"/><path d="M956.3 209.9 L952.2 193.9 L952.7 177.4 L957.7 161.8 L966.6 148.7 L978.8 139.5 L992.8 134.9 L1007.4 135.5 L1021.1 141.2"/><path d="M943.6 216.6 L938.4 195.9 L939.0 174.4 L945.5 154.1 L957.1 137.1 L972.9 125.1 L991.1 119.2 L1010.1 120.0 L1027.9 127.4"/><path d="M931.0 223.4 L924.5 197.9 L925.3 171.4 L933.2 146.4 L947.6 125.5 L967.0 110.7 L989.4 103.4 L1012.8 104.4 L1034.7 113.6"/><path d="M918.4 230.1 L910.7 199.9 L911.6 168.4 L921.0 138.8 L938.1 113.9 L961.1 96.3 L987.8 87.7 L1015.5 88.9 L1041.5 99.7"/><path d="M1388.7 227.4 L1400.2 220.0 L1413.2 217.0 L1426.4 218.7 L1438.5 224.9 L1448.2 235.0 L1454.6 247.9 L1457.0 262.4 L1455.3 277.1" stroke-dasharray="3 6"/><path d="M1380.8 216.5 L1395.8 206.9 L1412.7 203.0 L1429.8 205.2 L1445.5 213.2 L1458.1 226.3 L1466.4 243.2 L1469.6 262.1 L1467.3 281.1"/><path d="M1083.3 214.8 L1078.8 219.3 L1073.2 222.5 L1066.9 224.2 L1060.4 224.3 L1054.1 222.7 L1048.4 219.5 L1043.9 215.1 L1040.7 209.7"/><path d="M1089.2 218.7 L1083.4 224.6 L1076.2 228.8 L1068.0 231.0 L1059.5 231.1 L1051.2 229.0 L1043.9 224.9 L1038.0 219.2 L1033.9 212.1"/><path d="M363.4 208.8 L359.2 199.5 L358.7 189.3 L361.8 179.6 L368.2 171.5 L377.2 165.8 L387.7 163.3 L398.5 164.3 L408.3 168.6"/><path d="M355.4 213.6 L350.0 201.4 L349.2 188.3 L353.3 175.7 L361.6 165.0 L373.3 157.7 L387.0 154.4 L401.0 155.7 L413.8 161.3"/><path d="M1505.7 160.1 L1506.4 161.6 L1506.9 163.2 L1507.1 164.8 L1507.0 166.5 L1506.6 168.1 L1506.0 169.6 L1505.1 171.0 L1504.1 172.2" stroke-dasharray="3 6"/><path d="M1507.8 158.6 L1508.8 160.5 L1509.4 162.6 L1509.6 164.7 L1509.5 166.9 L1509.1 169.0 L1508.3 171.0 L1507.1 172.8 L1505.7 174.3"/><path d="M282.5 325.9 L269.7 336.7 L253.8 343.6 L236.1 345.9 L218.5 343.3 L202.7 336.1 L190.2 325.1 L182.3 311.2 L179.7 296.0"/><path d="M296.2 334.6 L279.7 348.7 L258.9 357.6 L235.9 360.6 L213.0 357.3 L192.5 347.9 L176.2 333.6 L166.0 315.6 L162.7 295.8"/><path d="M309.9 343.4 L289.6 360.7 L264.0 371.7 L235.7 375.3 L207.6 371.2 L182.3 359.8 L162.3 342.1 L149.7 320.0 L145.6 295.5"/><path d="M323.7 352.1 L299.5 372.7 L269.2 385.8 L235.6 390.1 L202.1 385.2 L172.1 371.6 L148.4 350.6 L133.4 324.3 L128.5 295.3"/><path d="M797.8 279.0 L790.4 261.6 L791.9 243.1 L802.0 226.8 L819.0 215.5 L839.9 211.2 L860.9 214.7 L878.5 225.3 L889.4 241.3" stroke-dasharray="3 6"/><path d="M784.8 286.1 L775.2 263.5 L777.1 239.4 L790.3 218.2 L812.4 203.5 L839.5 197.9 L866.9 202.5 L889.7 216.3 L903.9 237.1"/><path d="M626.3 304.6 L624.5 302.7 L623.0 300.5 L621.9 298.0 L621.1 295.3 L620.8 292.5 L620.8 289.7 L621.2 286.9 L622.0 284.2" stroke-dasharray="3 6"/><path d="M623.6 308.7 L621.3 306.2 L619.4 303.3 L618.0 300.0 L617.0 296.5 L616.5 292.9 L616.5 289.2 L617.0 285.6 L618.1 282.1"/><path d="M620.9 312.7 L618.1 309.6 L615.8 306.1 L614.0 302.1 L612.8 297.8 L612.2 293.3 L612.2 288.7 L612.9 284.3 L614.1 280.0"/><path d="M618.3 316.8 L615.0 313.1 L612.2 308.8 L610.1 304.1 L608.6 299.0 L607.9 293.7 L607.9 288.3 L608.7 283.0 L610.2 277.9"/><path d="M40.5 45.3 L57.2 40.2 L74.7 40.2 L91.4 45.4 L105.5 55.2 L115.6 68.7 L120.8 84.4 L120.5 100.9 L114.8 116.5" stroke-dasharray="3 6"/><path d="M32.9 31.3 L54.6 24.7 L77.4 24.7 L99.1 31.5 L117.4 44.2 L130.6 61.7 L137.3 82.2 L137.0 103.6 L129.5 123.9"/><path d="M25.3 17.3 L52.0 9.2 L80.1 9.3 L106.7 17.6 L129.3 33.2 L145.5 54.8 L153.9 80.0 L153.4 106.3 L144.2 131.3"/><path d="M1246.6 320.6 L1254.9 323.3 L1261.9 327.3 L1267.1 332.3 L1270.1 338.1 L1270.7 344.1 L1268.8 350.0 L1264.7 355.5 L1258.6 360.0" stroke-dasharray="3 6"/><path d="M1250.0 314.1 L1260.8 317.5 L1269.9 322.7 L1276.6 329.2 L1280.5 336.7 L1281.3 344.6 L1278.9 352.3 L1273.5 359.3 L1265.6 365.3"/><path d="M1527.6 65.5 L1543.0 60.1 L1560.4 58.5 L1577.6 60.9 L1592.4 67.0 L1602.9 76.0 L1607.8 86.7 L1606.6 97.8 L1599.2 108.0"/><path d="M1518.3 58.1 L1538.3 51.2 L1561.0 49.1 L1583.3 52.2 L1602.5 60.1 L1616.2 71.7 L1622.6 85.7 L1620.9 100.2 L1611.4 113.4"/><path d="M517.8 266.0 L516.8 253.4 L518.6 240.9 L523.1 229.1 L530.0 218.8 L538.9 210.5 L549.4 204.6 L560.9 201.5 L572.7 201.4"/><path d="M503.0 269.3 L501.7 252.8 L504.0 236.5 L509.8 221.3 L518.7 207.9 L530.4 197.0 L544.0 189.4 L558.9 185.4 L574.3 185.2"/><path d="M1287.5 175.2 L1304.2 173.9 L1320.7 176.5 L1334.7 182.6 L1344.8 191.6 L1349.7 202.3 L1348.8 213.4 L1342.2 223.7 L1330.8 231.8"/><path d="M1283.3 165.9 L1305.1 164.3 L1326.4 167.6 L1344.8 175.6 L1357.9 187.2 L1364.2 201.1 L1363.1 215.6 L1354.5 228.9 L1339.6 239.5"/><path d="M760.3 272.9 L770.9 268.8 L782.5 266.6 L794.5 266.7 L806.1 268.9 L816.7 273.1 L825.6 279.1 L832.3 286.5 L836.5 294.9"/><path d="M1146.6 196.8 L1135.3 217.1 L1117.7 231.1 L1096.6 236.9 L1075.2 233.4 L1056.5 221.3 L1043.4 202.3 L1037.8 179.2 L1040.5 155.6"/><path d="M1162.5 203.3 L1147.7 229.7 L1124.9 247.9 L1097.5 255.4 L1069.5 250.9 L1045.3 235.1 L1028.2 210.4 L1020.9 180.5 L1024.5 149.7"/><path d="M882.3 205.7 L875.9 206.7 L869.3 206.7 L862.9 205.6 L856.8 203.5 L851.1 200.4 L846.0 196.5 L841.8 191.7 L838.4 186.4" stroke-dasharray="3 6"/><path d="M958.8 303.6 L962.3 304.6 L965.5 306.1 L968.2 308.2 L970.4 310.7 L971.9 313.4 L972.6 316.4 L972.5 319.4 L971.7 322.4"/><path d="M960.0 299.4 L964.5 300.7 L968.7 302.7 L972.2 305.3 L975.0 308.5 L976.9 312.1 L977.9 316.0 L977.8 319.9 L976.7 323.7"/><path d="M1056.3 250.3 L1064.4 259.4 L1067.2 269.4 L1064.5 279.5 L1056.5 288.6 L1044.0 295.9 L1028.1 300.7 L1010.4 302.6 L992.5 301.4"/><path d="M1070.7 244.6 L1081.2 256.4 L1084.8 269.4 L1081.3 282.5 L1070.9 294.3 L1054.7 303.8 L1034.1 310.1 L1011.0 312.6 L987.8 311.0"/><path d="M1085.0 238.8 L1098.0 253.3 L1102.5 269.4 L1098.1 285.4 L1085.4 300.0 L1065.3 311.7 L1040.0 319.4 L1011.7 322.5 L983.0 320.6"/><path d="M266.5 284.6 L263.9 270.3 L267.0 256.1 L275.3 244.2 L287.5 236.7 L301.7 234.7 L315.5 238.5 L326.7 247.5 L333.5 260.3"/><path d="M256.6 288.7 L253.2 270.1 L257.2 251.6 L268.1 236.2 L284.0 226.5 L302.3 223.8 L320.3 228.8 L334.8 240.5 L343.7 257.1"/><path d="M246.7 292.8 L242.5 269.9 L247.5 247.1 L260.8 228.2 L280.4 216.2 L303.0 213.0 L325.1 219.0 L343.0 233.5 L353.9 253.9"/><path d="M648.3 312.7 L649.7 300.9 L656.3 290.7 L666.9 283.6 L679.8 280.8 L692.9 282.9 L704.0 289.5 L711.2 299.4 L713.3 311.1"/><path d="M638.6 313.5 L640.4 298.3 L648.9 284.9 L662.8 275.7 L679.6 272.1 L696.6 274.8 L710.9 283.4 L720.3 296.3 L723.1 311.5"/><path d="M845.4 204.0 L856.7 209.0 L864.9 215.3 L869.2 222.6 L869.2 230.1 L865.1 237.4 L857.1 243.8 L845.8 248.8 L832.2 252.0"/><path d="M854.0 197.3 L868.7 203.7 L879.3 212.0 L884.9 221.4 L884.9 231.2 L879.6 240.7 L869.1 249.0 L854.5 255.5 L836.9 259.7"/><path d="M862.5 190.5 L880.7 198.4 L893.7 208.6 L900.5 220.2 L900.7 232.3 L894.0 244.0 L881.2 254.2 L863.2 262.2 L841.5 267.3"/><path d="M1432.3 194.7 L1426.4 203.9 L1418.2 210.5 L1408.7 213.5 L1398.8 212.7 L1389.7 208.2 L1382.4 200.4 L1377.7 190.2 L1376.0 178.8"/><path d="M12.0 31.5 L19.4 35.8 L26.0 41.6 L31.6 48.7 L36.1 56.9 L39.3 66.0 L41.2 75.5 L41.6 85.3 L40.6 95.1"/><path d="M17.0 16.0 L26.6 21.6 L35.1 29.1 L42.5 38.4 L48.3 49.0 L52.5 60.8 L55.0 73.2 L55.5 85.9 L54.2 98.6"/><path d="M44.5 255.5 L51.4 261.1 L56.2 267.8 L58.6 275.2 L58.4 282.8 L55.5 290.1 L50.2 296.6 L42.9 302.0 L34.0 305.8"/><path d="M52.3 248.6 L61.4 255.9 L67.6 264.6 L70.7 274.3 L70.4 284.1 L66.7 293.6 L59.8 302.1 L50.3 309.1 L38.7 314.1"/><path d="M443.6 180.1 L438.7 179.1 L434.4 177.4 L431.0 175.3 L428.7 172.7 L427.7 169.9 L428.0 167.1 L429.7 164.3 L432.5 161.9"/><path d="M442.1 183.4 L435.6 182.1 L430.1 179.9 L425.6 177.1 L422.7 173.7 L421.4 170.1 L421.8 166.4 L423.9 162.9 L427.6 159.8"/><path d="M440.5 186.7 L432.6 185.1 L425.7 182.4 L420.3 178.9 L416.7 174.8 L415.1 170.3 L415.6 165.8 L418.2 161.5 L422.8 157.6"/><path d="M807.1 115.3 L818.9 109.2 L831.8 108.7 L843.9 113.8 L853.6 123.9 L859.4 137.5 L860.6 152.7 L857.0 167.3 L849.1 179.3"/><path d="M801.3 105.2 L816.6 97.3 L833.4 96.7 L849.1 103.3 L861.7 116.4 L869.3 134.1 L870.9 153.8 L866.2 172.8 L855.9 188.5"/><path d="M795.4 95.2 L814.3 85.4 L835.0 84.6 L854.4 92.9 L869.9 109.0 L879.2 130.7 L881.1 155.0 L875.3 178.4 L862.7 197.6"/><path d="M1245.2 106.3 L1243.5 114.9 L1237.9 123.0 L1228.7 129.9 L1216.5 135.3 L1202.3 138.7 L1187.0 139.9 L1171.6 138.8 L1157.3 135.5"/><path d="M1262.8 106.0 L1260.6 117.3 L1253.2 127.8 L1241.2 136.8 L1225.5 143.8 L1207.0 148.2 L1187.0 149.7 L1167.1 148.3 L1148.5 144.0"/><path d="M1280.4 105.8 L1277.7 119.6 L1268.6 132.5 L1253.8 143.7 L1234.4 152.3 L1211.6 157.7 L1187.1 159.6 L1162.6 157.8 L1139.7 152.5"/><path d="M1298.0 105.6 L1294.7 122.0 L1284.0 137.3 L1266.4 150.6 L1243.4 160.8 L1216.3 167.2 L1187.2 169.5 L1158.1 167.4 L1130.9 161.1"/><path d="M906.8 95.5 L897.2 96.3 L887.8 95.1 L880.1 92.1 L875.4 87.8 L874.7 82.9 L877.8 78.3 L884.5 74.7 L893.4 72.7"/><path d="M1289.3 307.3 L1300.8 300.0 L1314.2 296.9 L1328.0 298.2 L1340.5 303.8 L1350.1 313.1 L1355.8 324.9 L1356.7 337.8 L1352.9 350.2"/><path d="M351.1 283.0 L346.8 287.9 L341.6 291.8 L335.7 294.6 L329.5 296.1 L323.1 296.2 L316.7 295.0 L310.8 292.6 L305.4 288.9" stroke-dasharray="3 6"/><path d="M1538.4 231.7 L1546.2 235.1 L1552.7 240.9 L1557.2 248.6 L1559.3 257.4 L1558.8 266.4 L1555.7 274.9 L1550.4 281.9 L1543.3 286.9" stroke-dasharray="3 6"/><path d="M1540.3 223.1 L1550.4 227.6 L1558.8 235.1 L1564.7 245.1 L1567.4 256.6 L1566.7 268.3 L1562.7 279.3 L1555.8 288.5 L1546.6 294.9"/><path d="M1542.1 214.6 L1554.6 220.1 L1565.0 229.4 L1572.2 241.7 L1575.5 255.7 L1574.7 270.2 L1569.8 283.7 L1561.3 295.0 L1549.9 302.9"/><path d="M269.8 76.1 L272.2 73.5 L275.5 72.1 L279.3 71.9 L282.7 73.1 L285.4 75.4 L286.7 78.5 L286.6 81.9 L285.0 84.9"/><path d="M1353.9 311.0 L1351.4 306.7 L1349.7 302.0 L1348.8 297.1 L1348.8 292.1 L1349.6 287.2 L1351.2 282.5 L1353.7 278.1 L1356.8 274.2"/><path d="M1346.5 316.0 L1343.3 310.4 L1341.0 304.3 L1339.9 297.9 L1339.8 291.4 L1340.9 285.0 L1343.0 278.9 L1346.2 273.2 L1350.3 268.1"/><path d="M780.9 201.9 L778.3 202.2 L775.8 202.1 L773.3 201.5 L771.0 200.5 L768.9 199.0 L767.1 197.2 L765.8 195.1 L764.9 192.8" stroke-dasharray="3 6"/><path d="M-12.2 328.1 L-23.1 329.4 L-34.0 328.5 L-44.6 325.3 L-54.4 320.1 L-63.3 313.0 L-70.8 304.2 L-76.7 294.0 L-80.8 282.9"/><path d="M-8.7 347.3 L-22.8 349.0 L-37.0 347.8 L-50.8 343.7 L-63.6 336.9 L-75.1 327.7 L-84.8 316.2 L-92.5 303.0 L-97.8 288.5"/><path d="M-5.1 366.5 L-22.6 368.6 L-40.0 367.1 L-56.9 362.1 L-72.7 353.7 L-86.9 342.3 L-98.9 328.3 L-108.3 312.0 L-114.8 294.1"/><path d="M1241.2 149.3 L1232.9 158.7 L1219.8 165.7 L1203.6 169.1 L1186.6 168.6 L1171.0 164.2 L1159.0 156.5 L1152.2 146.6 L1151.7 135.8"/><path d="M1254.3 152.0 L1243.6 164.3 L1226.6 173.3 L1205.5 177.8 L1183.4 177.1 L1163.1 171.4 L1147.5 161.4 L1138.7 148.5 L1138.0 134.5"/><path d="M1175.7 104.4 L1175.0 87.6 L1181.3 71.9 L1193.4 60.2 L1209.2 54.3 L1226.0 55.4 L1241.0 63.2 L1251.5 76.3 L1255.8 92.6" stroke-dasharray="3 6"/><path d="M1197.2 65.7 L1198.5 66.4 L1199.7 67.3 L1200.7 68.4 L1201.5 69.6 L1202.0 71.0 L1202.3 72.4 L1202.4 73.8 L1202.1 75.3"/><path d="M1198.3 63.4 L1200.0 64.3 L1201.5 65.5 L1202.8 66.9 L1203.8 68.5 L1204.5 70.3 L1204.9 72.1 L1205.0 74.0 L1204.7 75.8"/><path d="M1644.9 303.1 L1646.9 313.2 L1643.8 323.2 L1636.1 331.7 L1624.7 337.8 L1611.1 340.6 L1597.0 339.8 L1584.1 335.4 L1574.3 328.0"/><path d="M1656.2 300.3 L1658.8 313.5 L1654.8 326.5 L1644.8 337.6 L1629.9 345.5 L1612.2 349.2 L1593.9 348.1 L1577.2 342.4 L1564.4 332.8"/><path d="M190.8 282.6 L196.7 278.6 L203.5 276.2 L210.7 275.7 L217.8 277.0 L224.3 280.0 L229.7 284.6 L233.6 290.4 L235.8 297.0"/><path d="M185.3 277.0 L192.9 271.8 L201.8 268.7 L211.1 268.0 L220.4 269.7 L228.8 273.7 L235.8 279.7 L240.9 287.2 L243.7 295.8"/><path d="M179.7 271.5 L189.2 265.0 L200.0 261.2 L211.6 260.4 L223.0 262.4 L233.4 267.3 L242.0 274.7 L248.2 284.0 L251.7 294.5"/><path d="M174.2 265.9 L185.4 258.2 L198.3 253.8 L212.0 252.7 L225.5 255.2 L237.9 261.0 L248.1 269.7 L255.6 280.7 L259.6 293.2"/><path d="M1620.1 307.4 L1611.1 316.7 L1597.4 322.5 L1581.5 323.8 L1566.3 320.3 L1554.6 312.7 L1548.4 302.3 L1549.0 291.0 L1556.1 280.9"/><path d="M1630.5 310.3 L1618.8 322.4 L1601.0 330.0 L1580.4 331.7 L1560.6 327.2 L1545.4 317.2 L1537.3 303.7 L1538.1 289.1 L1547.4 276.0"/><path d="M1640.9 313.3 L1626.6 328.2 L1604.7 337.5 L1579.3 339.6 L1554.9 334.0 L1536.1 321.8 L1526.3 305.1 L1527.2 287.1 L1538.6 271.0"/><path d="M1460.0 275.8 L1462.2 276.9 L1463.7 278.3 L1464.4 279.9 L1464.2 281.6 L1463.2 283.2 L1461.4 284.5 L1459.0 285.4 L1456.3 285.8"/><path d="M1461.3 274.4 L1464.1 275.8 L1466.1 277.7 L1467.0 279.8 L1466.8 282.0 L1465.5 284.0 L1463.1 285.7 L1460.1 286.9 L1456.5 287.4"/><path d="M621.8 227.2 L629.8 231.9 L636.7 238.5 L642.1 246.8 L645.6 256.2 L647.1 266.3 L646.5 276.5 L643.9 286.3 L639.4 295.1" stroke-dasharray="3 6"/><path d="M625.9 214.7 L636.4 220.8 L645.4 229.5 L652.3 240.2 L656.9 252.5 L658.9 265.6 L658.1 278.8 L654.7 291.6 L648.8 303.1"/><path d="M630.1 202.3 L643.0 209.8 L654.0 220.5 L662.6 233.7 L668.2 248.7 L670.7 264.9 L669.7 281.2 L665.5 296.9 L658.2 311.0"/><path d="M432.5 59.1 L444.8 63.3 L455.9 70.4 L465.0 80.0 L471.8 91.5 L475.8 104.2 L476.8 117.6 L474.9 130.9 L470.0 143.3" stroke-dasharray="3 6"/><path d="M436.0 42.1 L452.0 47.7 L466.3 56.9 L478.2 69.3 L487.0 84.2 L492.2 100.8 L493.6 118.2 L491.0 135.5 L484.7 151.7"/><path d="M473.8 291.6 L478.9 302.7 L480.9 314.8 L479.9 326.9 L475.9 338.4 L469.0 348.6 L459.8 356.8 L448.8 362.6 L436.8 365.4" stroke-dasharray="3 6"/><path d="M486.7 284.0 L493.2 298.5 L495.9 314.1 L494.6 329.9 L489.3 344.9 L480.4 358.1 L468.5 368.8 L454.2 376.3 L438.5 380.0"/><path d="M499.5 276.5 L507.6 294.3 L510.9 313.5 L509.3 332.9 L502.8 351.4 L491.8 367.7 L477.1 380.8 L459.5 390.0 L440.2 394.6"/><path d="M512.3 268.9 L521.9 290.0 L525.9 312.9 L523.9 336.0 L516.2 357.8 L503.2 377.2 L485.8 392.8 L464.9 403.7 L441.9 409.2"/><path d="M1336.2 182.0 L1321.1 180.9 L1307.0 174.3 L1295.5 162.9 L1287.7 147.9 L1284.6 130.8 L1286.3 113.4 L1292.7 97.5 L1303.2 84.9"/><path d="M1337.6 198.2 L1317.9 196.8 L1299.6 188.2 L1284.7 173.4 L1274.6 153.8 L1270.5 131.6 L1272.7 109.0 L1281.1 88.4 L1294.7 71.9"/><path d="M1339.0 214.4 L1314.8 212.6 L1292.3 202.1 L1273.9 183.8 L1261.5 159.7 L1256.4 132.3 L1259.1 104.5 L1269.4 79.2 L1286.2 58.9"/><path d="M1340.5 230.5 L1311.7 228.5 L1284.9 215.9 L1263.1 194.2 L1248.3 165.6 L1242.3 133.1 L1245.6 100.1 L1257.8 70.0 L1277.7 46.0"/><path d="M1149.5 351.4 L1143.2 346.4 L1140.1 340.7 L1140.6 334.8 L1144.5 329.2 L1151.6 324.5 L1161.2 321.1 L1172.4 319.3 L1184.1 319.3"/><path d="M1140.8 355.3 L1132.6 348.8 L1128.6 341.4 L1129.2 333.7 L1134.4 326.4 L1143.6 320.3 L1156.1 315.8 L1170.6 313.5 L1185.8 313.5"/><path d="M1132.2 359.2 L1122.0 351.2 L1117.1 342.0 L1117.9 332.5 L1124.3 323.6 L1135.6 316.1 L1150.9 310.6 L1168.8 307.7 L1187.5 307.7"/><path d="M1316.7 109.1 L1322.9 119.9 L1326.0 132.3 L1325.7 145.1 L1322.0 157.3 L1315.3 167.7 L1306.2 175.4 L1295.4 179.7 L1284.0 180.3"/><path d="M1325.3 100.6 L1333.4 114.6 L1337.3 130.7 L1336.9 147.4 L1332.1 163.3 L1323.4 176.8 L1311.6 186.8 L1297.6 192.4 L1282.8 193.1"/><path d="M274.0 138.9 L270.5 134.8 L268.4 129.8 L268.0 124.5 L269.2 119.3 L272.0 114.7 L276.1 111.2 L281.1 109.1 L286.5 108.6"/><path d="M270.6 142.8 L266.1 137.5 L263.4 131.0 L262.8 124.1 L264.4 117.3 L268.0 111.3 L273.3 106.8 L279.8 104.0 L286.8 103.4"/><path d="M360.4 364.4 L354.5 356.2 L351.0 346.4 L350.0 335.9 L351.8 325.6 L356.1 316.2 L362.5 308.6 L370.7 303.2 L379.9 300.6" stroke-dasharray="3 6"/><path d="M353.4 372.5 L345.8 361.7 L341.2 349.1 L339.9 335.5 L342.2 322.0 L347.8 309.8 L356.2 299.9 L366.8 292.9 L378.8 289.5"/><path d="M346.4 380.6 L337.0 367.3 L331.3 351.7 L329.9 335.0 L332.6 318.5 L339.5 303.4 L349.9 291.2 L362.9 282.6 L377.7 278.4"/><path d="M1021.4 173.8 L1015.2 180.9 L1003.7 185.9 L989.2 188.0 L974.2 186.8 L961.8 182.4 L954.0 175.7 L952.4 168.0 L957.3 160.7"/><path d="M1031.7 174.9 L1023.6 184.1 L1008.6 190.7 L989.7 193.4 L970.4 191.8 L954.1 186.1 L944.0 177.4 L942.0 167.4 L948.3 157.8"/><path d="M1042.0 176.1 L1031.9 187.4 L1013.6 195.4 L990.3 198.8 L966.5 196.8 L946.5 189.8 L934.1 179.2 L931.5 166.8 L939.4 155.0"/><path d="M1052.3 177.2 L1040.3 190.6 L1018.5 200.2 L990.9 204.2 L962.6 201.8 L938.8 193.5 L924.1 180.9 L921.1 166.2 L930.4 152.2"/><path d="M1015.1 154.3 L1004.5 162.3 L991.2 167.9 L976.2 170.7 L960.6 170.5 L945.7 167.4 L932.6 161.6 L922.3 153.4 L915.6 143.6"/><path d="M1028.9 161.0 L1015.1 171.3 L997.8 178.6 L978.3 182.3 L958.0 182.1 L938.6 178.1 L921.6 170.4 L908.2 159.9 L899.5 147.1"/><path d="M412.8 86.8 L411.1 88.3 L409.0 89.7 L406.5 90.8 L403.8 91.7 L400.9 92.3 L397.9 92.5 L394.9 92.5 L391.9 92.1"/><path d="M417.6 88.5 L415.4 90.6 L412.6 92.3 L409.4 93.8 L405.9 94.9 L402.2 95.6 L398.2 96.0 L394.3 95.9 L390.4 95.5"/><path d="M422.4 90.3 L419.6 92.8 L416.2 94.9 L412.3 96.7 L408.0 98.1 L403.4 99.0 L398.6 99.4 L393.7 99.4 L388.9 98.8"/><path d="M427.2 92.0 L423.9 95.0 L419.9 97.6 L415.2 99.7 L410.1 101.3 L404.6 102.4 L398.9 102.9 L393.1 102.8 L387.5 102.1"/><path d="M762.6 268.9 L782.4 257.3 L804.9 255.6 L826.0 264.0 L842.3 281.1 L850.9 304.0 L850.5 328.8 L841.0 351.3 L824.1 367.7"/><path d="M382.4 191.4 L392.5 186.8 L403.3 185.4 L414.0 187.3 L423.9 192.4 L432.3 200.4 L438.7 210.7 L442.6 222.5 L443.7 235.1"/><path d="M376.4 178.7 L389.5 172.7 L403.5 170.9 L417.4 173.4 L430.3 180.1 L441.3 190.4 L449.6 203.7 L454.6 219.1 L456.1 235.5"/><path d="M640.4 128.1 L643.4 139.7 L638.4 151.1 L626.4 160.2 L609.4 165.5 L590.5 166.0 L572.8 161.7 L559.5 153.3 L553.0 142.2" stroke-dasharray="3 6"/><path d="M1370.5 44.8 L1389.5 36.0 L1410.6 36.1 L1429.6 44.9 L1443.2 60.8 L1448.8 81.0 L1445.4 101.7 L1433.6 119.0 L1415.6 129.8" stroke-dasharray="3 6"/><path d="M1361.6 33.2 L1386.4 21.8 L1413.7 21.8 L1438.5 33.2 L1456.2 54.0 L1463.5 80.3 L1459.0 107.1 L1443.7 129.7 L1420.3 143.7"/><path d="M490.9 61.6 L494.2 57.7 L498.4 54.8 L503.2 53.2 L508.3 53.0 L513.2 54.2 L517.6 56.8 L521.1 60.5 L523.6 65.0"/><path d="M486.3 58.6 L490.5 53.5 L496.0 49.7 L502.2 47.6 L508.8 47.4 L515.2 49.0 L520.9 52.3 L525.6 57.1 L528.7 63.0"/><path d="M481.6 55.6 L486.8 49.3 L493.6 44.7 L501.3 42.1 L509.4 41.8 L517.2 43.7 L524.3 47.8 L530.0 53.7 L533.9 61.0"/><path d="M477.0 52.6 L483.2 45.1 L491.2 39.6 L500.3 36.5 L509.9 36.2 L519.3 38.5 L527.6 43.4 L534.4 50.4 L539.0 59.0"/><path d="M524.2 155.1 L521.3 156.1 L518.2 156.6 L515.1 156.5 L512.0 155.8 L509.2 154.6 L506.8 153.0 L504.8 150.9 L503.5 148.5" stroke-dasharray="3 6"/><path d="M789.4 308.4 L796.4 311.4 L802.5 315.1 L807.4 319.3 L811.1 324.0 L813.4 329.0 L814.3 334.2 L813.7 339.3 L811.7 344.4"/><path d="M796.8 300.6 L805.9 304.4 L813.8 309.2 L820.2 314.7 L825.0 320.8 L828.0 327.3 L829.2 334.0 L828.4 340.8 L825.7 347.3"/><path d="M804.2 292.7 L815.4 297.5 L825.1 303.3 L833.0 310.1 L838.9 317.6 L842.6 325.6 L844.0 333.9 L843.1 342.2 L839.8 350.2"/><path d="M1516.8 102.8 L1519.8 109.5 L1518.1 116.4 L1511.9 122.4 L1502.2 126.5 L1490.4 128.3 L1478.3 127.3 L1467.8 123.8 L1460.5 118.3"/><path d="M1525.2 100.5 L1529.1 109.3 L1526.9 118.2 L1518.9 125.9 L1506.2 131.3 L1490.9 133.6 L1475.2 132.3 L1461.6 127.8 L1452.0 120.6"/><path d="M1533.7 98.2 L1538.5 109.0 L1535.8 119.9 L1525.9 129.4 L1510.3 136.1 L1491.5 138.9 L1472.2 137.4 L1455.4 131.8 L1443.6 122.9"/><path d="M1542.1 95.9 L1547.9 108.7 L1544.6 121.7 L1532.9 133.0 L1514.4 140.9 L1492.0 144.2 L1469.1 142.4 L1449.1 135.7 L1435.2 125.3"/><path d="M1618.9 172.3 L1615.7 170.1 L1613.4 167.6 L1612.3 164.8 L1612.4 161.9 L1613.7 159.1 L1616.1 156.6 L1619.5 154.5 L1623.6 153.0"/><path d="M1614.9 174.9 L1610.7 172.1 L1607.8 168.8 L1606.3 165.1 L1606.4 161.4 L1608.1 157.8 L1611.2 154.6 L1615.6 151.8 L1621.0 149.8"/><path d="M1186.0 247.6 L1182.0 246.5 L1178.3 244.3 L1175.4 241.1 L1173.3 237.1 L1172.2 232.6 L1172.2 228.0 L1173.4 223.6 L1175.5 219.7" stroke-dasharray="3 6"/><path d="M1185.5 252.8 L1180.3 251.3 L1175.6 248.4 L1171.7 244.3 L1169.0 239.1 L1167.6 233.3 L1167.6 227.3 L1169.1 221.5 L1171.9 216.4"/><path d="M1185.1 257.9 L1178.6 256.2 L1172.8 252.6 L1168.0 247.4 L1164.7 241.1 L1163.0 233.9 L1163.0 226.6 L1164.8 219.5 L1168.3 213.2"/><path d="M980.6 177.5 L970.4 184.0 L957.9 188.2 L944.1 190.0 L930.3 189.0 L917.3 185.5 L906.3 179.6 L898.1 171.9 L893.3 163.0"/><path d="M992.2 184.0 L978.8 192.4 L962.6 197.9 L944.8 200.2 L926.7 198.9 L909.9 194.3 L895.5 186.7 L884.9 176.7 L878.7 165.0"/><path d="M1656.4 137.7 L1640.9 139.2 L1625.5 136.4 L1611.6 129.5 L1600.3 119.1 L1592.5 106.0 L1588.9 91.3 L1589.7 76.2 L1594.9 62.0" stroke-dasharray="3 6"/><path d="M1660.4 153.1 L1640.2 155.0 L1620.2 151.4 L1602.2 142.4 L1587.5 128.9 L1577.3 111.8 L1572.6 92.7 L1573.7 73.1 L1580.4 54.6"/><path d="M1664.3 168.4 L1639.5 170.9 L1614.9 166.4 L1592.7 155.3 L1574.6 138.7 L1562.1 117.7 L1556.3 94.2 L1557.6 70.0 L1566.0 47.2"/><path d="M1260.5 372.3 L1253.9 372.1 L1247.4 370.9 L1241.5 368.9 L1236.4 366.0 L1232.4 362.4 L1229.5 358.3 L1228.1 353.8 L1228.0 349.3"/><path d="M1261.2 378.5 L1252.5 378.3 L1244.2 376.8 L1236.5 374.1 L1229.9 370.3 L1224.6 365.6 L1220.9 360.3 L1219.0 354.5 L1219.0 348.6"/><path d="M1261.8 384.7 L1251.2 384.4 L1240.9 382.6 L1231.5 379.3 L1223.3 374.6 L1216.8 368.9 L1212.2 362.3 L1209.9 355.2 L1209.9 348.0"/><path d="M1262.5 390.9 L1249.8 390.6 L1237.6 388.4 L1226.4 384.5 L1216.7 379.0 L1209.0 372.2 L1203.6 364.4 L1200.8 356.0 L1200.8 347.3"/><path d="M1546.8 82.3 L1547.2 87.3 L1546.5 92.3 L1544.8 97.1 L1542.0 101.7 L1538.2 105.9 L1533.6 109.7 L1528.2 112.9 L1522.1 115.5"/><path d="M1560.4 81.0 L1561.0 87.5 L1560.1 94.0 L1557.8 100.2 L1554.1 106.2 L1549.2 111.7 L1543.2 116.6 L1536.2 120.8 L1528.3 124.1"/><path d="M1574.0 79.7 L1574.7 87.7 L1573.6 95.7 L1570.8 103.4 L1566.3 110.7 L1560.3 117.5 L1552.8 123.5 L1544.2 128.6 L1534.5 132.8"/><path d="M827.4 253.9 L815.8 248.9 L805.6 240.7 L797.6 229.7 L792.1 216.8 L789.6 202.7 L790.3 188.3 L794.0 174.6 L800.6 162.4" stroke-dasharray="3 6"/><path d="M824.1 270.6 L809.0 264.0 L795.8 253.3 L785.3 239.1 L778.2 222.3 L775.0 204.0 L775.8 185.3 L780.6 167.4 L789.2 151.6"/><path d="M820.8 287.2 L802.2 279.2 L785.9 266.0 L773.0 248.5 L764.2 227.8 L760.3 205.3 L761.3 182.3 L767.3 160.3 L777.8 140.8"/><path d="M817.4 303.8 L795.3 294.3 L776.0 278.7 L760.7 257.9 L750.3 233.3 L745.6 206.5 L746.8 179.2 L753.9 153.1 L766.4 129.9"/><path d="M337.4 226.3 L342.5 227.3 L346.7 229.3 L349.5 232.2 L350.6 235.5 L349.8 238.8 L347.2 241.7 L343.1 243.9 L338.1 245.0" stroke-dasharray="3 6"/><path d="M1406.6 370.3 L1398.5 373.6 L1390.0 375.2 L1381.3 375.2 L1372.7 373.5 L1364.7 370.1 L1357.4 365.2 L1351.1 359.0 L1346.0 351.7"/><path d="M1412.9 383.0 L1402.4 387.3 L1391.2 389.4 L1379.9 389.4 L1368.8 387.1 L1358.3 382.8 L1348.8 376.4 L1340.6 368.4 L1334.1 358.9"/><path d="M953.1 135.0 L951.5 131.2 L951.3 127.1 L952.6 123.2 L955.1 120.0 L958.6 117.8 L962.6 117.1 L966.6 117.8 L970.1 119.9" stroke-dasharray="3 6"/><path d="M950.2 136.9 L948.2 131.9 L947.9 126.6 L949.6 121.5 L952.9 117.3 L957.4 114.6 L962.6 113.6 L967.8 114.6 L972.3 117.3"/><path d="M947.3 138.8 L944.8 132.7 L944.6 126.1 L946.6 119.9 L950.6 114.7 L956.2 111.4 L962.6 110.2 L969.0 111.3 L974.6 114.7"/><path d="M589.3 318.5 L582.8 336.0 L568.6 349.8 L549.1 357.6 L527.5 358.2 L507.4 351.5 L492.1 338.5 L484.3 321.4 L485.3 303.1"/><path d="M605.1 319.8 L596.7 342.5 L578.3 360.5 L552.9 370.7 L524.7 371.5 L498.6 362.7 L478.8 345.8 L468.6 323.6 L469.9 299.8"/><path d="M620.9 321.1 L610.6 349.0 L587.9 371.1 L556.6 383.7 L522.0 384.7 L489.8 373.9 L465.4 353.1 L453.0 325.8 L454.5 296.5"/><path d="M369.6 203.5 L388.0 202.2 L406.4 203.8 L422.8 208.4 L435.7 215.5 L443.9 224.3 L446.4 234.0 L443.1 243.6 L434.3 252.2"/><path d="M364.4 194.6 L388.3 192.8 L412.1 195.0 L433.5 201.0 L450.3 210.1 L460.9 221.6 L464.2 234.2 L459.9 246.7 L448.4 257.9"/><path d="M359.1 185.7 L388.6 183.5 L417.9 186.2 L444.2 193.5 L464.9 204.8 L477.9 218.8 L481.9 234.3 L476.7 249.7 L462.5 263.5"/><path d="M846.4 179.4 L859.7 179.2 L872.2 181.9 L882.0 187.1 L887.8 194.2 L888.6 201.9 L884.4 209.3 L875.7 215.2 L863.9 218.8"/><path d="M844.1 173.5 L861.4 173.2 L877.6 176.7 L890.4 183.5 L897.9 192.6 L899.0 202.7 L893.5 212.3 L882.2 220.0 L866.9 224.7"/><path d="M841.8 167.5 L863.1 167.1 L883.1 171.5 L898.8 179.9 L908.0 191.1 L909.3 203.5 L902.6 215.3 L888.7 224.8 L869.8 230.5"/><path d="M1290.3 363.1 L1283.9 360.5 L1277.9 356.6 L1272.8 351.5 L1268.5 345.4 L1265.2 338.6 L1263.1 331.3 L1262.2 323.6 L1262.5 315.9"/><path d="M1287.4 375.6 L1279.0 372.1 L1271.3 367.0 L1264.6 360.4 L1259.0 352.6 L1254.7 343.7 L1252.0 334.1 L1250.8 324.1 L1251.2 314.1"/><path d="M1284.4 388.0 L1274.1 383.7 L1264.7 377.4 L1256.4 369.3 L1249.5 359.7 L1244.3 348.8 L1240.9 337.0 L1239.4 324.7 L1239.9 312.3"/><path d="M1281.5 400.4 L1269.2 395.3 L1258.0 387.9 L1248.2 378.2 L1240.0 366.8 L1233.8 353.8 L1229.8 339.8 L1228.0 325.3 L1228.6 310.6"/><path d="M878.1 220.1 L878.8 224.0 L877.9 228.0 L875.4 231.7 L871.5 235.1 L866.2 237.9 L859.8 240.2 L852.7 241.6 L845.1 242.3" stroke-dasharray="3 6"/><path d="M548.1 217.8 L553.9 228.1 L552.2 238.7 L543.3 248.4 L528.3 255.8 L509.2 260.0 L488.4 260.4 L468.7 257.0 L452.6 250.3" stroke-dasharray="3 6"/><path d="M563.6 213.8 L571.1 227.2 L568.9 241.0 L557.3 253.6 L537.9 263.2 L513.0 268.6 L486.0 269.2 L460.4 264.8 L439.4 256.0"/><path d="M579.1 209.9 L588.3 226.3 L585.6 243.3 L571.4 258.7 L547.4 270.6 L516.8 277.3 L483.6 278.0 L452.0 272.6 L426.2 261.8"/><path d="M594.5 205.9 L605.5 225.4 L602.4 245.6 L585.4 263.9 L557.0 278.0 L520.6 286.0 L481.2 286.8 L443.7 280.4 L413.1 267.6"/><path d="M856.7 259.3 L858.8 259.0 L861.0 259.1 L863.1 259.6 L865.2 260.4 L867.0 261.6 L868.7 263.2 L870.1 265.0 L871.3 267.0" stroke-dasharray="3 6"/><path d="M855.8 254.9 L858.6 254.5 L861.5 254.7 L864.2 255.3 L866.9 256.4 L869.3 258.0 L871.5 260.0 L873.4 262.3 L874.8 265.0"/><path d="M855.0 250.6 L858.5 250.1 L861.9 250.3 L865.4 251.0 L868.6 252.4 L871.6 254.3 L874.3 256.8 L876.6 259.7 L878.4 263.0"/><path d="M854.2 246.2 L858.3 245.7 L862.4 245.8 L866.5 246.8 L870.3 248.4 L873.9 250.7 L877.1 253.6 L879.8 257.0 L882.0 260.9"/><path d="M978.0 285.5 L980.3 287.6 L981.4 289.9 L981.2 292.4 L979.8 294.7 L977.3 296.6 L973.9 298.0 L969.9 298.8 L965.7 298.8" stroke-dasharray="3 6"/><path d="M981.1 283.9 L984.0 286.6 L985.5 289.6 L985.3 292.8 L983.4 295.8 L980.2 298.3 L975.7 300.2 L970.5 301.1 L965.1 301.2"/><path d="M234.7 210.5 L249.8 218.2 L258.5 228.9 L259.4 240.9 L252.3 252.0 L238.3 260.4 L220.1 264.6 L200.6 263.9 L183.3 258.3"/><path d="M241.2 202.9 L260.8 212.8 L272.1 226.7 L273.3 242.3 L264.0 256.8 L245.9 267.7 L222.1 273.2 L196.8 272.2 L174.4 264.9"/><path d="M247.6 195.2 L271.8 207.4 L285.7 224.5 L287.1 243.7 L275.7 261.6 L253.4 275.0 L224.2 281.7 L193.0 280.5 L165.4 271.6"/><path d="M254.1 187.5 L282.7 202.0 L299.3 222.4 L301.0 245.1 L287.4 266.3 L261.0 282.3 L226.2 290.2 L189.3 288.8 L156.4 278.2"/><path d="M996.3 248.5 L995.2 251.2 L993.5 253.5 L991.5 255.1 L989.1 256.2 L986.6 256.5 L984.2 256.0 L981.9 254.8 L979.9 253.0"/><path d="M999.1 249.7 L997.6 253.1 L995.5 256.0 L992.9 258.2 L989.8 259.6 L986.6 260.0 L983.3 259.4 L980.3 257.8 L977.8 255.5"/><path d="M1001.9 250.8 L1000.1 255.0 L997.5 258.6 L994.2 261.3 L990.5 263.0 L986.5 263.5 L982.5 262.7 L978.8 260.8 L975.7 257.9"/><path d="M1174.7 354.6 L1166.4 348.2 L1159.8 339.5 L1155.4 328.9 L1153.4 317.4 L1154.1 305.7 L1157.3 294.6 L1162.9 284.9 L1170.3 277.2"/><path d="M1169.9 366.7 L1159.1 358.3 L1150.5 346.9 L1144.8 333.3 L1142.3 318.3 L1143.1 303.1 L1147.3 288.6 L1154.5 276.0 L1164.2 266.0"/><path d="M1165.1 378.7 L1151.8 368.5 L1141.3 354.4 L1134.2 337.6 L1131.1 319.2 L1132.1 300.4 L1137.3 282.7 L1146.1 267.1 L1158.1 254.9"/><path d="M799.9 365.7 L794.0 353.8 L794.2 341.2 L800.4 329.3 L812.0 319.4 L827.8 312.6 L846.0 309.7 L864.6 310.9 L881.6 316.2"/><path d="M785.0 371.1 L777.2 355.6 L777.4 339.2 L785.6 323.7 L800.7 310.9 L821.2 302.1 L844.8 298.3 L869.0 299.9 L891.1 306.7"/><path d="M101.1 209.1 L88.1 212.6 L73.6 213.0 L60.0 210.2 L49.9 204.8 L45.1 197.7 L46.5 190.3 L53.7 183.8 L65.6 179.4"/><path d="M107.6 213.2 L90.8 217.7 L71.9 218.2 L54.3 214.6 L41.2 207.6 L34.9 198.4 L36.7 188.7 L46.1 180.2 L61.5 174.5"/><path d="M114.2 217.2 L93.5 222.8 L70.3 223.4 L48.6 219.0 L32.4 210.3 L24.7 199.0 L26.9 187.1 L38.5 176.7 L57.5 169.7"/><path d="M120.8 221.3 L96.2 227.9 L68.6 228.6 L42.9 223.4 L23.7 213.1 L14.5 199.6 L17.1 185.5 L30.9 173.1 L53.4 164.8"/><path d="M1101.9 317.6 L1095.1 336.3 L1083.3 351.4 L1067.7 361.4 L1050.0 365.1 L1032.3 362.1 L1016.4 352.7 L1004.1 338.0 L996.8 319.6" stroke-dasharray="3 6"/><path d="M1117.7 321.5 L1108.9 345.8 L1093.6 365.5 L1073.3 378.4 L1050.3 383.2 L1027.2 379.3 L1006.5 367.1 L990.6 348.0 L981.1 324.1"/><path d="M1133.5 325.4 L1122.7 355.3 L1103.8 379.5 L1078.9 395.5 L1050.6 401.4 L1022.2 396.5 L996.7 381.5 L977.1 358.0 L965.4 328.6"/><path d="M1047.7 307.7 L1046.6 308.3 L1045.3 308.8 L1043.9 309.1 L1042.5 309.4 L1040.9 309.5 L1039.4 309.4 L1037.9 309.3 L1036.5 309.0" stroke-dasharray="3 6"/><path d="M420.0 145.0 L432.6 137.9 L449.2 134.4 L466.7 135.3 L482.0 140.3 L492.5 148.5 L496.2 158.6 L492.5 168.6 L482.0 176.9"/><path d="M409.6 140.9 L426.1 131.6 L447.6 127.2 L470.3 128.3 L490.3 134.8 L503.9 145.5 L508.7 158.6 L503.9 171.6 L490.3 182.3"/><path d="M399.2 136.8 L419.5 125.4 L446.0 119.9 L474.0 121.3 L498.6 129.3 L515.3 142.5 L521.2 158.6 L515.3 174.6 L498.6 187.8"/><path d="M49.0 237.8 L55.2 220.2 L69.4 206.0 L89.5 197.4 L112.1 195.9 L133.6 201.7 L150.5 213.9 L160.2 230.5 L161.0 248.8"/><path d="M32.1 236.8 L40.1 213.9 L58.6 195.4 L84.7 184.2 L114.1 182.3 L142.1 189.8 L164.1 205.7 L176.6 227.2 L177.7 251.0"/><path d="M15.2 235.8 L25.1 207.6 L47.9 184.8 L80.0 171.1 L116.1 168.7 L150.5 178.0 L177.7 197.5 L193.1 224.0 L194.4 253.3"/><path d="M386.9 292.7 L385.1 281.4 L388.8 270.4 L397.8 260.9 L410.8 254.2 L426.4 251.0 L442.5 251.8 L457.3 256.3 L469.0 264.2" stroke-dasharray="3 6"/><path d="M373.5 295.5 L371.1 280.8 L376.1 266.5 L387.7 254.2 L404.6 245.4 L424.8 241.3 L445.8 242.3 L465.1 248.2 L480.3 258.4"/><path d="M360.1 298.2 L357.2 280.2 L363.3 262.6 L377.6 247.4 L398.4 236.7 L423.3 231.6 L449.1 232.8 L472.8 240.1 L491.5 252.6"/><path d="M346.8 301.0 L343.3 279.6 L350.5 258.7 L367.5 240.7 L392.3 227.9 L421.8 221.9 L452.4 223.3 L480.6 231.9 L502.8 246.8"/><path d="M281.8 257.6 L288.6 252.3 L296.8 249.0 L305.8 247.8 L314.8 248.8 L323.1 252.1 L330.0 257.3 L335.0 264.0 L337.6 271.7"/><path d="M274.5 252.1 L283.4 245.2 L294.1 240.8 L305.7 239.3 L317.4 240.7 L328.2 244.9 L337.2 251.7 L343.7 260.4 L347.1 270.4"/><path d="M505.0 150.7 L498.5 134.7 L498.1 117.0 L503.8 100.7 L514.6 88.4 L528.7 82.3 L543.7 83.4 L557.0 91.6 L566.4 105.5" stroke-dasharray="3 6"/><path d="M496.3 158.5 L487.9 137.7 L487.4 114.7 L494.8 93.4 L508.8 77.5 L527.2 69.6 L546.6 71.1 L564.0 81.7 L576.2 99.7"/><path d="M521.9 188.4 L518.2 188.9 L514.6 188.8 L511.0 188.0 L507.6 186.5 L504.4 184.4 L501.6 181.8 L499.3 178.6 L497.4 175.1" stroke-dasharray="3 6"/></g></svg><div class="a" style="left:1632px;top:0;width:1.5px;height:1172px;background:#a6a6a6"></div><div class="a" style="left:1633.5px;top:0px;width:2.5px;height:108px;background:#f2f2f2"></div><div class="a" style="left:1633.5px;top:108px;width:2.5px;height:19px;background:#2c5a9a"></div><div class="a" style="left:1633.5px;top:127px;width:2.5px;height:173px;background:#cfcfcf"></div><div class="a" style="left:1633.5px;top:300px;width:2.5px;height:16px;background:#8e9db3"></div><div class="a" style="left:1633.5px;top:316px;width:2.5px;height:34px;background:#c9c9c9"></div><div class="a" style="left:1633.5px;top:350px;width:2.5px;height:39px;background:#2b5aa0"></div><div class="a" style="left:1633.5px;top:389px;width:2.5px;height:206px;background:#c5c8ce"></div><div class="a" style="left:1633.5px;top:595px;width:2.5px;height:5px;background:#6f7f98"></div><div class="a" style="left:1633.5px;top:600px;width:2.5px;height:360px;background:#b4c1d4"></div><div class="a" style="left:1633.5px;top:960px;width:2.5px;height:15px;background:#8f96a0"></div><div class="a" style="left:1633.5px;top:975px;width:2.5px;height:197px;background:#7d8ba3"></div><svg class="a" style="left:0;top:0" width="90" height="56" viewBox="0 0 90 56">
<g fill="#43a0da">
<circle cx="29" cy="21.5" r="11"/>
<circle cx="45" cy="22" r="10.8"/>
<circle cx="59" cy="27.5" r="12.3"/>
<circle cx="24" cy="34" r="10"/>
<circle cx="36" cy="37" r="13"/>
<circle cx="48" cy="34" r="10.5"/>
</g></svg><div class="a" style="left:584px;top:12px;width:440px;height:36px;box-sizing:border-box;border:2px solid #dddbda;border-radius:4px;background:#fff;"></div><svg class="a" style="left:600px;top:18px" width="20" height="20" viewBox="0 0 20 20"><circle cx="9.6" cy="9.6" r="4.4" fill="none" stroke="#a9a6a3" stroke-width="1.5"/><line x1="12.6" y1="12.8" x2="16.8" y2="16.8" stroke="#a9a6a3" stroke-width="1.5" stroke-linecap="round"/></svg><svg class="a" style="left:1390px;top:10px" width="240" height="42" viewBox="0 0 240 42">
<rect x="7" y="8.5" width="40" height="22.5" rx="2.5" fill="none" stroke="#a5a5a5" stroke-width="2"/>
<line x1="30" y1="8.5" x2="30" y2="31" stroke="#a5a5a5" stroke-width="2"/>
<polygon points="18,11.2 20.6,17 26.6,17.4 22,21.4 23.5,27.6 18,24.3 12.5,27.6 14,21.4 9.4,17.4 15.4,17" fill="#a5a5a5"/>
<polygon points="34.8,15.2 43.2,15.2 39,20.8" fill="#a5a5a5"/>
<rect x="62" y="10" width="20" height="20" rx="3" fill="#a5a5a5"/>
<rect x="70.8" y="13.5" width="2.4" height="13" fill="#fff"/>
<rect x="65.5" y="18.8" width="13" height="2.4" fill="#fff"/>
<path d="M99 14.5 Q99 9.8 104 9.8 Q109 9.8 109 14.5 Q109 17.3 106 19.2 Q104 20.5 104 23" fill="none" stroke="#a5a5a5" stroke-width="2.8" stroke-linecap="round"/>
<circle cx="104" cy="27.6" r="1.8" fill="#a5a5a5"/>
<g transform="translate(138,18)"><circle r="8" fill="#a5a5a5"/>
<g fill="#a5a5a5"><rect x="-2.8" y="-11" width="5.6" height="5" rx="1"/><rect x="-2.8" y="6" width="5.6" height="5" rx="1"/>
<rect x="-2.8" y="-11" width="5.6" height="5" rx="1" transform="rotate(60)"/><rect x="-2.8" y="6" width="5.6" height="5" rx="1" transform="rotate(60)"/>
<rect x="-2.8" y="-11" width="5.6" height="5" rx="1" transform="rotate(120)"/><rect x="-2.8" y="6" width="5.6" height="5" rx="1" transform="rotate(120)"/></g>
<circle r="4.8" fill="#fff"/><polygon points="1.2,-4 -2.4,0.8 -0.2,0.8 -1.2,4.2 2.4,-0.8 0.2,-0.8" fill="#a5a5a5"/></g>
<path d="M159 27.5 L161 25.5 L161 18 Q161 11 167.5 11 Q174 11 174 18 L174 25.5 L176 27.5 Z" fill="#a5a5a5" stroke="#a5a5a5" stroke-width="1.6" stroke-linejoin="round"/>
<path d="M165 30 Q167.5 33 170 30 Z" fill="#a5a5a5"/>
<circle cx="210" cy="20" r="16.5" fill="#e4e7ee" stroke="#9a9a9a" stroke-width="0.8"/>
</svg><svg class="a" style="left:1583px;top:13px" width="34" height="34" viewBox="0 0 34 34">
<defs><clipPath id="av"><circle cx="17" cy="17" r="16"/></clipPath></defs>
<g clip-path="url(#av)">
<path d="M4 34 Q3 22 5.5 13 Q6 7 9 5 L12 8.5 Q17 6.5 22 8.5 L25 5 Q28 7 28.5 13 Q31 22 30 34 Z" fill="#a7b6d0"/>
<path d="M7.5 5.5 L11.5 9 L7 12 Z M26.5 5.5 L22.5 9 L27 12 Z" fill="#6a80aa"/>
<ellipse cx="17" cy="21.5" rx="9" ry="7.6" fill="#fff"/>
<path d="M8 20 Q8.5 12.5 17 12.8 Q25.5 12.5 26 20 Q23 16 19.5 17.5 Q20 15 18 14.5 Q16 17 8 20 Z" fill="#54698f"/>
<ellipse cx="12.6" cy="22" rx="1" ry="1.3" fill="#54698f"/><ellipse cx="21.5" cy="22" rx="1" ry="1.3" fill="#54698f"/>
<ellipse cx="17" cy="31.8" rx="3.4" ry="2.2" fill="#6a80aa"/>
</g></svg><svg class="a" style="left:22px;top:62px" width="24" height="24" viewBox="0 0 24 24" fill="#757575">
<circle cx="3.5" cy="3.5" r="2.1"/><circle cx="11.5" cy="3.5" r="2.1"/><circle cx="19.5" cy="3.5" r="2.1"/>
<circle cx="3.5" cy="11.5" r="2.1"/><circle cx="11.5" cy="11.5" r="2.1"/><circle cx="19.5" cy="11.5" r="2.1"/>
<circle cx="3.5" cy="19.5" r="2.1"/><circle cx="11.5" cy="19.5" r="2.1"/><circle cx="19.5" cy="19.5" r="2.1"/></svg><div class="a" style="left:326px;top:58px;width:86px;height:32px;background:#eaf0f8"></div><div class="a" style="left:326px;top:54px;width:86px;height:4px;background:#2b6fc9"></div><svg class="a" style="left:0;top:0" width="1632" height="90"><polyline points="301.8,70 307.0,75.5 312.2,70" fill="none" stroke="#3e3e3c" stroke-width="1.6"/><polyline points="387.8,70 393.0,75.5 398.2,70" fill="none" stroke="#3e3e3c" stroke-width="1.6"/><polyline points="469.4,70 474.6,75.5 479.8,70" fill="none" stroke="#3e3e3c" stroke-width="1.6"/><polyline points="605.8,70 611.0,75.5 616.2,70" fill="none" stroke="#3e3e3c" stroke-width="1.6"/><polyline points="709.8,70 715.0,75.5 720.2,70" fill="none" stroke="#3e3e3c" stroke-width="1.6"/><polyline points="813.8,70 819.0,75.5 824.2,70" fill="none" stroke="#3e3e3c" stroke-width="1.6"/><polyline points="931.8,70 937.0,75.5 942.2,70" fill="none" stroke="#3e3e3c" stroke-width="1.6"/><polyline points="1053.8,70 1059.0,75.5 1064.2,70" fill="none" stroke="#3e3e3c" stroke-width="1.6"/><polyline points="1149.8,70 1155.0,75.5 1160.2,70" fill="none" stroke="#3e3e3c" stroke-width="1.6"/><polyline points="1311.8,70 1317.0,75.5 1322.2,70" fill="none" stroke="#3e3e3c" stroke-width="1.6"/><polyline points="1417.8,70 1423.0,75.5 1428.2,70" fill="none" stroke="#3e3e3c" stroke-width="1.6"/><polygon points="1494,70 1504,70 1499,76" fill="#3e3e3c"/><g transform="translate(1600,64)" stroke="#757575" stroke-width="3.6"><line x1="3.6" y1="12.4" x2="11.9" y2="4.1"/><line x1="12.9" y1="3.1" x2="15" y2="1"/><polygon points="0.3,15.7 1.4,11.3 4.7,14.6" fill="#757575" stroke-width="0.6"/></g></svg><div class="a" style="left:10px;top:106px;width:1609px;height:140px;box-sizing:border-box;background:#f3f2f2;border-radius:4px;border:2px solid #dddbda;border-top:1px solid #f8f8f8;box-shadow:0 1px 2px rgba(0,0,0,0.10)"></div><div class="a" style="left:16px;top:180px;width:1600px;height:60px;background:#fff;border-radius:0 0 2px 2px"></div><svg class="a" style="left:28px;top:128px" width="32" height="32" viewBox="0 0 32 32"><rect width="32" height="32" rx="4" fill="#ef8b66"/>
<circle cx="16" cy="9.2" r="2.7" fill="#fff"/><path d="M6 13.2 L26 13.2 L19.6 18.2 L21.4 24.8 L16 21.4 L10.6 24.8 L12.4 18.2 Z" fill="#fff"/></svg><svg class="a" style="left:290px;top:190px" width="20" height="16"><polygon points="4,6 14,6 9,12" fill="#6b6b6b"/></svg><div class="a" style="left:1276px;top:134px;width:94px;height:32px;box-sizing:border-box;border:2px solid #dddbda;border-radius:4px;background:#fff;"></div><div class="a" style="left:1374px;top:134px;width:230px;height:32px;box-sizing:border-box;border:2px solid #dddbda;border-radius:4px;background:#fff;"></div><div class="a" style="left:1430px;top:134px;width:2px;height:32px;background:#dddbda"></div><div class="a" style="left:1502px;top:134px;width:2px;height:32px;background:#dddbda"></div><div class="a" style="left:1570.5px;top:134px;width:3px;height:32px;background:#dddbda"></div><svg class="a" style="left:1290px;top:140px" width="20" height="20"><rect x="8" y="5" width="2" height="12" fill="#22529a"/><rect x="3" y="10" width="12" height="2" fill="#22529a"/></svg><svg class="a" style="left:1580px;top:146px" width="16" height="12"><polygon points="2,2 14,2 8,9" fill="#22529a"/></svg><div class="a" style="left:10px;top:259px;width:1609px;height:57px;box-sizing:border-box;background:#fff;border-radius:4px;border:2px solid #dddbda;box-shadow:0 1px 2px rgba(0,0,0,0.10)"></div><svg class="a" style="left:0;top:250px" width="1636" height="70" viewBox="0 250 1636 70">
<circle cx="40" cy="286" r="14.8" fill="#fff" stroke="#d4d2d0" stroke-width="2"/>
<polyline points="37.8,281.3 43.2,286.8 37.8,292.3" fill="none" stroke="#2b6fc9" stroke-width="1.8"/>
<path d="M76 270 L310 270 L326 286 L310 302 L76 302 A16 16 0 0 1 76 270 Z" fill="#70c489"/>
<polyline points="183,284.5 187.5,289 195.5,281" fill="none" stroke="#fff" stroke-width="1.8"/>
<path d="M313 270 L570 270 L586 286 L570 302 L313 302 L329 286 Z" fill="#2b6fc9"/>
<path d="M575 271 L832 271 L848 286 L832 301 L575 301 L591 286 Z" fill="#f3f2f2" stroke="#d9d7d5" stroke-width="1"/>
<path d="M837 271 L1096 271 L1112 286 L1096 301 L837 301 L853 286 Z" fill="#f3f2f2" stroke="#d9d7d5" stroke-width="1"/>
<path d="M1100 271 L1347 271 A15 15 0 0 1 1347 301 L1100 301 L1116 286 Z" fill="#f3f2f2" stroke="#d9d7d5" stroke-width="1"/>
<rect x="575" y="270" width="257" height="2" fill="#dddbda"/><rect x="575" y="300" width="257" height="2" fill="#dddbda"/>
<rect x="837" y="270" width="259" height="2" fill="#dddbda"/><rect x="837" y="300" width="259" height="2" fill="#dddbda"/>
<rect x="1100" y="270" width="247" height="2" fill="#dddbda"/><rect x="1100" y="300" width="247" height="2" fill="#dddbda"/>
<rect x="1368.5" y="270.5" width="239" height="31" rx="15.5" fill="#2b6fc9" stroke="#1f4f94" stroke-width="1"/>
<polyline points="1397,288.5 1401,292.5 1409.5,284.5" fill="none" stroke="#fff" stroke-width="1.8"/>
</svg><div class="a" style="left:10px;top:328px;width:1074px;height:900px;box-sizing:border-box;background:#fff;border:2px solid #dddbda;border-radius:4px"></div><div class="a" style="left:28px;top:374px;width:1038px;height:2px;background:#dddbda"></div><div class="a" style="left:28px;top:372px;width:100px;height:2.5px;background:#2b6fc9"></div><div class="a" style="left:124px;top:408px;width:942px;height:54px;box-sizing:border-box;background:#f3f2f2;border:2px solid #dddbda;border-top-right-radius:4px"></div><div class="a" style="left:28px;top:462px;width:1038px;height:66px;box-sizing:border-box;border:2px solid #dddbda;border-top:none;border-radius:0 0 4px 4px"></div><div class="a" style="left:44px;top:478px;width:934px;height:32px;box-sizing:border-box;border:2px solid #dddbda;border-radius:4px;background:#fff;"></div><div class="a" style="left:990px;top:478px;width:59px;height:31px;background:#2a5598;border-radius:4px"></div><div class="a" style="left:896px;top:544px;width:32px;height:32px;box-sizing:border-box;border:2px solid #dddbda;border-radius:4px;background:#fff"></div><div class="a" style="left:932px;top:544px;width:32px;height:32px;box-sizing:border-box;border:2px solid #dddbda;border-radius:4px;background:#fff"></div><div class="a" style="left:968.5px;top:544px;width:97.5px;height:32px;box-sizing:border-box;border:2px solid #dddbda;border-radius:4px;background:#fff"></div><svg class="a" style="left:896px;top:544px" width="70" height="32">
<path d="M10.6 9 L23.3 9 L17.9 15.6 L17.9 21 L16 21 L16 15.6 Z" fill="#6b6b6b"/>
<path d="M56.5 10.4 A5.3 5.3 0 1 0 56.3 19.3" fill="none" stroke="#6b6b6b" stroke-width="1.9"/>
<polygon points="53.3,14.7 58.9,14.7 58.9,9" fill="#6b6b6b"/>
</svg><div class="a" style="left:118px;top:602px;width:378px;height:2px;background:repeating-linear-gradient(to right,#d4d2d0 0 6px,transparent 6px 10px)"></div><div class="a" style="left:598px;top:602px;width:468px;height:2px;background:repeating-linear-gradient(to right,#d4d2d0 0 6px,transparent 6px 10px)"></div><div class="a" style="left:496px;top:588px;width:101px;height:32px;box-sizing:border-box;border:2px solid #dddbda;border-radius:4px;background:#fff;"></div><div class="a" style="left:128px;top:680px;width:938px;height:2px;background:repeating-linear-gradient(to right,#d4d2d0 0 6px,transparent 6px 10px)"></div><div class="a" style="left:66px;top:748px;width:2px;height:250px;background:#dddbda"></div><div class="a" style="left:66px;top:1030px;width:2px;height:29px;background:#dddbda"></div><div class="a" style="left:66px;top:1090px;width:2px;height:30px;background:#dddbda"></div><svg class="a" style="left:28px;top:722px" width="16" height="14"><polyline points="1.5,3.5 7,9.5 12.5,3.5" fill="none" stroke="#3f5072" stroke-width="1.6"/></svg><svg class="a" style="left:56px;top:720px" width="24" height="24" viewBox="0 0 24 24"><rect width="24" height="24" rx="3" fill="#98abc4"/>
<rect x="4.8" y="6" width="14.4" height="11.3" fill="#fff"/><polyline points="4.8,6.3 12,12.2 19.2,6.3" fill="none" stroke="#98abc4" stroke-width="1.1"/></svg><div class="a" style="left:1034px;top:722px;width:20px;height:20px;box-sizing:border-box;border:2px solid #dddbda;border-radius:3px;background:#fff"></div><svg class="a" style="left:1034px;top:722px" width="20" height="20"><polygon points="5.8,5 14.2,5 10,10.8" fill="#6b6b6b"/></svg><div class="a" style="left:86px;top:774px;width:980px;height:222px;box-sizing:border-box;border:2px solid #dddbda;border-radius:4px;background:#f3f2f2;"></div><svg class="a" style="left:28px;top:1003px" width="16" height="16"><polyline points="3.5,2.5 9.5,8 3.5,13.5" fill="none" stroke="#3f5072" stroke-width="1.6"/></svg><svg class="a" style="left:56px;top:1002px" width="24" height="24" viewBox="0 0 24 24"><rect width="24" height="24" rx="3" fill="#98abc4"/>
<rect x="4.8" y="6" width="14.4" height="11.3" fill="#fff"/><polyline points="4.8,6.3 12,12.2 19.2,6.3" fill="none" stroke="#98abc4" stroke-width="1.1"/></svg><div class="a" style="left:1034px;top:1004px;width:20px;height:20px;box-sizing:border-box;border:2px solid #dddbda;border-radius:3px;background:#fff"></div><svg class="a" style="left:1034px;top:1004px" width="20" height="20"><polygon points="5.8,5 14.2,5 10,10.8" fill="#6b6b6b"/></svg><svg class="a" style="left:28px;top:1063px" width="16" height="16"><polyline points="3.5,2.5 9.5,8 3.5,13.5" fill="none" stroke="#3f5072" stroke-width="1.6"/></svg><svg class="a" style="left:56px;top:1062px" width="24" height="24" viewBox="0 0 24 24"><rect width="24" height="24" rx="3" fill="#98abc4"/>
<rect x="4.8" y="6" width="14.4" height="11.3" fill="#fff"/><polyline points="4.8,6.3 12,12.2 19.2,6.3" fill="none" stroke="#98abc4" stroke-width="1.1"/></svg><div class="a" style="left:1034px;top:1064px;width:20px;height:20px;box-sizing:border-box;border:2px solid #dddbda;border-radius:3px;background:#fff"></div><svg class="a" style="left:1034px;top:1064px" width="20" height="20"><polygon points="5.8,5 14.2,5 10,10.8" fill="#6b6b6b"/></svg><div class="a" style="left:439px;top:1120px;width:214px;height:32px;box-sizing:border-box;border:2px solid #dddbda;border-radius:4px;background:#fff;"></div><div class="a" style="left:622px;top:1120px;width:2px;height:32px;background:#dddbda"></div><svg class="a" style="left:628px;top:1128px" width="20" height="16"><polygon points="3.5,3.7 16.9,3.7 10.2,11" fill="#2b6fc9"/></svg><div class="a" style="left:1096px;top:328px;width:524px;height:130px;box-sizing:border-box;background:#fff;border:2px solid #dddbda;border-radius:4px;box-shadow:0 1px 2px rgba(0,0,0,0.10)"></div><div class="a" style="left:1096px;top:470px;width:524px;height:265px;box-sizing:border-box;background:#fff;border:2px solid #dddbda;border-radius:4px;box-shadow:0 1px 2px rgba(0,0,0,0.10)"></div><div class="a" style="left:1096px;top:749px;width:524px;height:48px;box-sizing:border-box;background:#fff;border:2px solid #dddbda;border-radius:4px;box-shadow:0 1px 2px rgba(0,0,0,0.10)"></div><svg class="a" style="left:1112px;top:340px" width="24" height="24" viewBox="0 0 24 24"><rect width="24" height="24" rx="2.5" fill="#ebcd6c"/>
<polygon points="12.75,6.6 17.2,12.2 8.3,12.2" fill="#fff"/>
<path d="M12.75 11.5 L12.75 15.5 Q12.5 17.5 8.6 19.5 M12.75 15.5 Q13 17.5 16.9 19.5" fill="none" stroke="#fff" stroke-width="1.9" stroke-linecap="round"/></svg><svg class="a" style="left:1112px;top:482px" width="24" height="24" viewBox="0 0 24 24"><rect width="24" height="24" rx="2.5" fill="#b8ac94"/>
<path d="M6.1 8 L6.1 17.6 Q6.1 18.6 7.1 18.6 L15.4 18.6" fill="none" stroke="#fff" stroke-width="2"/>
<path d="M9.2 4.6 L15 4.6 L15 8.6 L18.6 8.6 L18.6 15.7 Q18.6 16.7 17.6 16.7 L9.2 16.7 Q8.2 16.7 8.2 15.7 L8.2 5.6 Q8.2 4.6 9.2 4.6 Z" fill="#fff"/>
<polygon points="16.2,4.6 18.6,7.2 16.2,7.2" fill="#fff"/></svg><div class="a" style="left:1584px;top:482px;width:20px;height:20px;box-sizing:border-box;border:2px solid #dddbda;border-radius:3px;background:#fff;"></div><svg class="a" style="left:1584px;top:482px" width="20" height="20"><polygon points="5.8,7.2 14.2,7.2 10,12.7" fill="#6b6b6b"/></svg><div class="a" style="left:1100px;top:518px;width:515px;height:1px;background:repeating-linear-gradient(to right,#cfcdcb 0 6px,transparent 6px 10px)"></div><div class="a" style="left:1100px;top:721px;width:515px;height:1px;background:repeating-linear-gradient(to right,#cfcdcb 0 6px,transparent 6px 10px)"></div><div class="a" style="left:1292px;top:590px;width:130px;height:32px;box-sizing:border-box;border:2px solid #dddbda;border-radius:4px;background:#fff;"></div><svg class="a" style="left:1309px;top:597px" width="16" height="16"><path d="M7.5 3 L7.5 11.5 M3.8 6.5 L7.5 2.8 L11.2 6.5 M2 10 L2 13.3 L13 13.3 L13 10" fill="none" stroke="#22529a" stroke-width="1.7"/></svg><svg class="a" style="left:1112px;top:760px" width="24" height="24" viewBox="0 0 24 24"><rect width="24" height="24" rx="2.5" fill="#e3d484"/>
<path d="M6.8 5.5 L16.9 5.5 L16.9 10 L12 15 L11.8 17 L16.6 17 L16.6 18.3 L6.8 18.3 Q6 17.5 5.3 17.2 Q6.3 16.6 5.3 15.6 Q6.3 14.9 5.3 14 Q6.3 13.3 5.3 12.3 Q6.3 11.6 5.3 10.6 Q6.3 9.9 5.3 9 Q6.3 8.3 5.3 7.3 Q6 6.5 6.8 5.5 Z" fill="#fff"/>
<g fill="#e3d484"><rect x="9.1" y="8.6" width="5.5" height="1.4"/><rect x="9.1" y="11.4" width="3.8" height="1.4"/><rect x="9.1" y="14.3" width="2.8" height="1.4"/></g>
<path d="M17.6 10.6 L12.2 16" stroke="#fff" stroke-width="1.6" stroke-linecap="round"/></svg><div class="a" style="left:1584px;top:760px;width:20px;height:20px;box-sizing:border-box;border:2px solid #dddbda;border-radius:3px;background:#fff;"></div><svg class="a" style="left:1584px;top:760px" width="20" height="20"><polygon points="5.8,7.2 14.2,7.2 10,12.7" fill="#6b6b6b"/></svg><div class="t" style="left:636.00px;top:20.00px;font-size:14px;color:#6f6f6f;letter-spacing:-0.565px;">Search Leads and more…</div>
<div class="t" style="left:66.00px;top:63.00px;font-size:18.5px;color:#3e3e3c;letter-spacing:-1.056px;">Sales</div>
<div class="t" style="left:144.00px;top:64.00px;font-size:14px;color:#3a3a3a;letter-spacing:-0.340px;">Home</div>
<div class="t" style="left:204.60px;top:64.00px;font-size:14px;color:#3a3a3a;letter-spacing:0.086px;">Opportunities</div>
<div class="t" style="left:339.00px;top:64.00px;font-size:14px;color:#3a3a3a;letter-spacing:-0.831px;">Leads</div>
<div class="t" style="left:423.00px;top:64.00px;font-size:14px;color:#3a3a3a;letter-spacing:-0.759px;">Tasks</div>
<div class="t" style="left:505.40px;top:64.00px;font-size:14px;color:#3a3a3a;letter-spacing:-0.733px;">Files</div>
<div class="t" style="left:556.00px;top:64.00px;font-size:14px;color:#3a3a3a;letter-spacing:-0.316px;">Notes</div>
<div class="t" style="left:641.80px;top:64.00px;font-size:14px;color:#3a3a3a;letter-spacing:-0.424px;">Accounts</div>
<div class="t" style="left:747.00px;top:64.00px;font-size:14px;color:#3a3a3a;letter-spacing:-0.344px;">Contacts</div>
<div class="t" style="left:850.00px;top:64.00px;font-size:14px;color:#3a3a3a;letter-spacing:-0.359px;">Campaigns</div>
<div class="t" style="left:968.50px;top:64.00px;font-size:14px;color:#3a3a3a;letter-spacing:-0.500px;">Dashboards</div>
<div class="t" style="left:1089.50px;top:64.00px;font-size:14px;color:#3a3a3a;letter-spacing:-0.504px;">Reports</div>
<div class="t" style="left:1186.00px;top:64.00px;font-size:14px;color:#3a3a3a;letter-spacing:-0.189px;">Chatter</div>
<div class="t" style="left:1255.00px;top:64.00px;font-size:14px;color:#3a3a3a;letter-spacing:-0.487px;">Groups</div>
<div class="t" style="left:1348.50px;top:64.00px;font-size:14px;color:#3a3a3a;letter-spacing:-0.291px;">Calendar</div>
<div class="t" style="left:1453.00px;top:64.00px;font-size:14px;color:#3a3a3a;letter-spacing:-0.227px;">More</div>
<div class="t" style="left:71.40px;top:127.00px;font-size:13.5px;color:#3e3e3c;letter-spacing:-0.512px;">Lead</div>
<div class="t" style="left:71.40px;top:141.00px;font-size:18px;color:#333130;font-weight:700;letter-spacing:0.183px;">Mrs. Alice</div>
<div class="t" style="left:31.50px;top:192.00px;font-size:12.5px;color:#6b6b6b;letter-spacing:-0.157px;">Company</div>
<div class="t" style="left:148.00px;top:192.00px;font-size:12.5px;color:#6b6b6b;letter-spacing:0.069px;">Title</div>
<div class="t" style="left:236.30px;top:192.00px;font-size:12.5px;color:#6b6b6b;letter-spacing:0.033px;">Phone(2)</div>
<div class="t" style="left:369.80px;top:192.00px;font-size:12.5px;color:#6b6b6b;letter-spacing:-0.313px;">Email</div>
<div class="t" style="left:31.50px;top:211.00px;font-size:13.5px;color:#363636;letter-spacing:-0.350px;">YAMM</div>
<div class="t" style="left:368.60px;top:213.00px;font-size:14px;color:#2f6fc5;letter-spacing:-0.246px;">alice.test@test.com</div>
<div class="t" style="left:1314.50px;top:143.00px;font-size:13.5px;color:#22529a;letter-spacing:-0.086px;">Follow</div>
<div class="t" style="left:1391.50px;top:143.00px;font-size:13.5px;color:#22529a;letter-spacing:-0.241px;">Edit</div>
<div class="t" style="left:1447.60px;top:143.00px;font-size:13.5px;color:#22529a;letter-spacing:-0.105px;">Delete</div>
<div class="t" style="left:1519.00px;top:143.00px;font-size:13.5px;color:#22529a;letter-spacing:0.144px;">Clone</div>
<div class="t" style="left:422.00px;top:279.00px;font-size:13px;color:#fff;font-weight:700;letter-spacing:-0.044px;">Nouveau</div>
<div class="t" style="left:697.50px;top:279.00px;font-size:13.5px;color:#5c5c5c;letter-spacing:0.307px;">Actif</div>
<div class="t" style="left:938.00px;top:279.00px;font-size:13.5px;color:#5c5c5c;letter-spacing:0.055px;">Développer</div>
<div class="t" style="left:1202.80px;top:279.00px;font-size:13.5px;color:#5c5c5c;letter-spacing:-0.077px;">Converted</div>
<div class="t" style="left:1417.40px;top:280.00px;font-size:14px;color:#fff;letter-spacing:0.158px;">Mark Status as Complete</div>
<div class="t" style="left:43.20px;top:347.00px;font-size:13px;color:#363636;font-weight:700;letter-spacing:1.196px;">ACTIVITY</div>
<div class="t" style="left:169.30px;top:346.00px;font-size:14px;color:#5c5c5c;letter-spacing:0.032px;">CHATTER</div>
<div class="t" style="left:291.50px;top:346.00px;font-size:14px;color:#5c5c5c;letter-spacing:0.312px;">DETAILS</div>
<div class="t" style="left:408.00px;top:346.00px;font-size:14px;color:#5c5c5c;letter-spacing:0.250px;">NEWS</div>
<div class="t" style="left:44.30px;top:426.00px;font-size:14px;color:#1f4b8e;font-weight:700;letter-spacing:-0.271px;">Log a Call</div>
<div class="t" style="left:143.50px;top:426.00px;font-size:14px;color:#5c5c5c;">New Task</div>
<div class="t" style="left:238.30px;top:426.00px;font-size:14px;color:#5c5c5c;letter-spacing:0.066px;">New Event</div>
<div class="t" style="left:341.50px;top:426.00px;font-size:14px;color:#5c5c5c;">Email</div>
<div class="t" style="left:61.00px;top:487.00px;font-size:13.5px;color:#6f6f6f;letter-spacing:-0.359px;">Recap your call…</div>
<div class="t" style="left:1006.50px;top:487.00px;font-size:13px;color:#fff;font-weight:700;letter-spacing:0.240px;">Add</div>
<div class="t" style="left:27.30px;top:553.00px;font-size:16px;color:#363636;letter-spacing:0.382px;">Activity Timeline</div>
<div class="t" style="left:985.30px;top:551.00px;font-size:13.5px;color:#22529a;letter-spacing:-0.030px;">Expand All</div>
<div class="t" style="left:28.00px;top:595.00px;font-size:16px;color:#363636;letter-spacing:0.123px;">Next Steps</div>
<div class="t" style="left:512.50px;top:596.00px;font-size:13.5px;color:#c9c7c5;letter-spacing:-0.103px;">More Steps</div>
<div class="t" style="left:344.00px;top:641.00px;font-size:13.5px;color:#363636;letter-spacing:-0.022px;">No next steps. To get things moving, add a task or set up a meeting.</div>
<div class="t" style="left:28.00px;top:673.00px;font-size:16px;color:#363636;letter-spacing:0.188px;">Past Activity</div>
<div class="t" style="left:97.50px;top:725.00px;font-size:15px;color:#2f6fc5;letter-spacing:0.252px;">Email: Reminder: Have you tried our new solution?</div>
<div class="t" style="left:97.50px;top:749.00px;font-size:13.5px;color:#363636;letter-spacing:-0.078px;">You sent an email</div>
<div class="t" style="left:990.30px;top:726.00px;font-size:12.5px;color:#5c5c5c;letter-spacing:-0.272px;">Today</div>
<div class="t" style="left:98.50px;top:782.00px;font-size:12.5px;color:#6b6b6b;letter-spacing:0.088px;">Description</div>
<div class="t" style="left:98.00px;top:797.00px;font-size:13.5px;color:#363636;letter-spacing:0.028px;">Additional To: alice.test@test.com</div>
<div class="t" style="left:98.00px;top:815.00px;font-size:13.5px;color:#363636;letter-spacing:-0.750px;">CC:</div>
<div class="t" style="left:98.00px;top:833.00px;font-size:13.5px;color:#363636;letter-spacing:-1.066px;">BCC:</div>
<div class="t" style="left:98.00px;top:851.00px;font-size:13.5px;color:#363636;letter-spacing:0.268px;">Attachment:</div>
<div class="t" style="left:98.00px;top:887.00px;font-size:13.5px;color:#363636;letter-spacing:0.016px;">Subject: Reminder: Have you tried our new solution?</div>
<div class="t" style="left:98.00px;top:905.00px;font-size:13.5px;color:#363636;letter-spacing:-0.306px;">Body:</div>
<div class="t" style="left:98.00px;top:923.00px;font-size:13.5px;color:#363636;letter-spacing:0.333px;">Hi,</div>
<div class="t" style="left:98.00px;top:959.00px;font-size:13.5px;color:#363636;letter-spacing:0.019px;">Just a follow-up on my last email.</div>
<div class="t" style="left:97.50px;top:1007.00px;font-size:15px;color:#2f6fc5;letter-spacing:0.101px;">E-mail : test</div>
<div class="t" style="left:97.50px;top:1031.00px;font-size:13.5px;color:#363636;letter-spacing:-0.078px;">You sent an email</div>
<div class="t" style="left:990.30px;top:1008.00px;font-size:12.5px;color:#5c5c5c;letter-spacing:-0.272px;">Today</div>
<div class="t" style="left:97.50px;top:1067.00px;font-size:15px;color:#2f6fc5;letter-spacing:0.252px;">Email: Reminder: Have you tried our new solution?</div>
<div class="t" style="left:97.50px;top:1091.00px;font-size:13.5px;color:#363636;letter-spacing:-0.078px;">You sent an email</div>
<div class="t" style="left:990.30px;top:1068.00px;font-size:12.5px;color:#5c5c5c;letter-spacing:-0.272px;">Today</div>
<div class="t" style="left:456.00px;top:1128.00px;font-size:13.5px;color:#c9c7c5;letter-spacing:-0.023px;">Load More Past Activities</div>
<div class="t" style="left:1148.30px;top:345.00px;font-size:16px;color:#3a3836;font-weight:700;letter-spacing:0.150px;">We found no potential duplicates of this lead.</div>
<div class="t" style="left:1112.20px;top:385.00px;font-size:13.5px;color:#6b6b6b;letter-spacing:0.112px;">No duplicate rules are activated. Activate duplicate rules to identify potential</div>
<div class="t" style="left:1112.20px;top:402.00px;font-size:13.5px;color:#6b6b6b;letter-spacing:0.024px;">duplicate records.</div>
<div class="t" style="left:1148.30px;top:487.00px;font-size:16px;color:#3a3836;font-weight:700;letter-spacing:-0.052px;">Files (0)</div>
<div class="t" style="left:1332.00px;top:596.00px;font-size:14px;color:#22529a;letter-spacing:-0.402px;">Upload Files</div>
<div class="t" style="left:1320.40px;top:635.00px;font-size:13.5px;color:#363636;letter-spacing:0.082px;">Or drop files</div>
<div class="t" style="left:1148.30px;top:765.00px;font-size:16px;color:#3a3836;font-weight:700;letter-spacing:0.216px;">Notes (0)</div>
<div class="a" style="left:22px;top:706px;width:1042px;height:402px;border:5px solid #e8402a;box-shadow:0 3px 4px rgba(0,0,0,0.28), inset 0 3px 4px rgba(0,0,0,0.22)"></div></body></html>
